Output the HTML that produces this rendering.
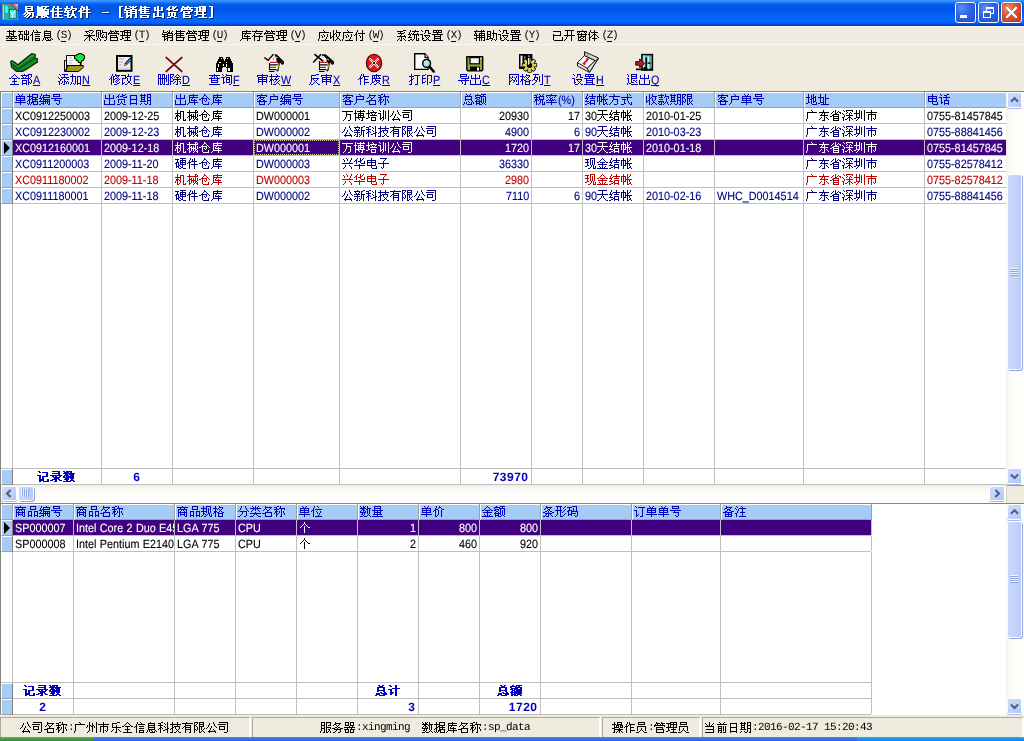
<!DOCTYPE html>
<html lang="zh-CN"><head><meta charset="utf-8"><title>易顺佳软件 - [销售出货管理]</title>
<style>
*{box-sizing:border-box;margin:0;padding:0}
html,body{width:1024px;height:741px;overflow:hidden}
body{position:relative;will-change:transform;text-rendering:geometricPrecision;background:#efebde;font-family:"Liberation Sans",sans-serif;font-size:12px;line-height:12px;color:#000;cursor:default}
svg{display:block;shape-rendering:crispEdges;fill:currentColor;overflow:visible}
u{text-decoration:none}
/* bitmap CJK run + real text layer */
.c{display:inline-block;position:relative;height:12px;vertical-align:top;overflow:visible}
.c svg{position:absolute;left:0;top:0}
.t{position:absolute;left:0;top:0;width:100%;height:100%;overflow:hidden;white-space:nowrap;color:transparent;font-size:12px;line-height:12px}
.l,.lb{display:inline-block;vertical-align:top;height:12px;line-height:13px;font-size:12px;white-space:pre}
.l{transform:scaleX(.9);transform-origin:0 0;word-spacing:.4px;-webkit-text-stroke:.12px currentColor}
.lb{font-weight:bold;letter-spacing:.5px;margin-right:-.5px}
.m,.mo{display:inline-block;vertical-align:top;height:12px;line-height:13px;font-family:"Liberation Mono",monospace;font-size:11px;letter-spacing:-.6px;white-space:pre}
.tl .l{line-height:12px}
.m u,.tl u{display:inline-block;vertical-align:top;border-bottom:1px solid currentColor;height:12px;line-height:inherit}

/* title bar */
#titlebar{position:absolute;left:0;top:0;width:1024px;height:26px;
 background:linear-gradient(to bottom,#3d97ff 0,#2f8cff 1.5px,#0e6ef6 3px,#0259e8 5px,#0055e4 8px,#025bee 12px,#0564fa 16px,#0668ff 21px,#0460f6 23px,#0050e0 24px,#0040c8 25px,#0038b8 26px)}
#titlebar .ttl{position:absolute;left:0;top:6px}
.ttlt{left:23px;top:5px;width:192px;height:14px;font-size:13px;font-weight:bold}
.wb{position:absolute;top:2px;width:21px;height:21px;border:1px solid #fff;border-radius:3px;
 background:radial-gradient(circle at 30% 25%,#5a8cf8 0,#2e63e6 45%,#2050d2 100%);box-shadow:inset 0 0 2px rgba(0,0,40,.35)}
.wb.cls{background:radial-gradient(circle at 30% 25%,#ee8a6a 0,#d8502c 50%,#c23c1c 100%)}
.wb svg{position:absolute;left:-1px;top:-1px}
.wb.min i{position:absolute;left:4px;top:12px;width:7px;height:3px;background:#fff}
.wb.rst i{position:absolute;left:7px;top:4px;width:8px;height:7px;border:1px solid #fff;border-top-width:2px}
.wb.rst b{position:absolute;left:4px;top:8px;width:8px;height:7px;border:1px solid #fff;border-top-width:2px;background:#2e5fe0}

/* menu */
#menubar{position:absolute;left:0;top:26px;width:1024px;height:19px;background:#efebde;border-top:1px solid #fbfaf6;border-bottom:1px solid #f8f7f1}
.mi{position:absolute;top:3px;height:12px;white-space:nowrap}
.mi .m{margin-left:1.500px;letter-spacing:-1.400px}

/* toolbar */
#toolbar{position:absolute;left:0;top:46px;width:1024px;height:45px;background:#efebde}
.tb{position:absolute;top:0;width:50px;height:44px}
.tb>svg{position:absolute}
.tl{position:absolute;top:28px;height:13px;white-space:nowrap;color:#0000c0}

/* grids */
.grid{position:absolute;left:0;width:1024px;background:#fff;border-left:1px solid #85857a;border-top:1px solid #85857a;overflow:hidden}
.grid>*{margin-left:-1px;margin-top:-1px}
.hr{position:absolute;left:0;height:16px;width:1024px}
.hc{position:absolute;top:0;height:16px;background:#a5cbf7;border-left:1px solid #fff;border-top:1px solid #fff;border-bottom:1px solid #a0a0a0;box-shadow:1px 0 0 #a0a0a0;color:#0000c0;padding:1px 0 0 1px;white-space:nowrap;overflow:hidden}
.hc.ind{}
.row,.frow{position:absolute;left:0;height:16px;border-bottom:1px solid #c0c0c0}
.frow{border-top:0}
.row.sel{background:#400080}
.ic{position:absolute;left:1px;top:0;height:16px;background:#a5cbf7;border-left:1px solid #fff;border-top:1px solid #fff;border-bottom:1px solid #a0a0a0;box-shadow:1px 0 0 #808080}
.row.sel .ic{height:16px}
.ic s{position:absolute;left:2px;top:1px;width:0;height:0;border-left:6px solid #000;border-top:6px solid transparent;border-bottom:6px solid transparent}
.dc,.fc{position:absolute;top:0;height:15px;padding:2px 2px 0 2px;white-space:nowrap;overflow:hidden;box-shadow:1px 0 0 #c0c0c0}
.row.sel .dc{box-shadow:1px 0 0 #c0c0c0}
.R{text-align:right}.C{text-align:center}
.foc{outline:1px dotted #d0d0a0;outline-offset:-1px}
.fc{color:#0000c0;padding-right:3px}
.vl{position:absolute;width:1px;background:#c0c0c0}
.hl{position:absolute;height:1px;background:#c0c0c0}

/* status bar */
#status{position:absolute;left:0;top:715px;width:1024px;height:22px;background:#efebde}
.sp{position:absolute;top:2px;height:20px;border-top:1px solid #aca899;border-left:1px solid #aca899;border-right:2px solid #fff}
.st{position:absolute;top:4px;white-space:nowrap;height:12px}
#taskbar{position:absolute;left:0;top:737px;width:1024px;height:4px;background:linear-gradient(#4a8cf4,#2f74e6 50%,#2a6be0)}
#taskbar b{position:absolute;left:857px;top:0;width:167px;height:4px;background:linear-gradient(#3aa8f6,#1a90ee 50%,#168ae8)}
#taskbar div{width:94px;height:4px;background:linear-gradient(#62b862,#3f9a3f 50%,#3a943a)}

/* scrollbars */
.sbv{position:absolute;width:17px;background:linear-gradient(to right,#eeede6 0,#f6f5f0 1px,#f9f8f4 3px,#fdfdfb 8px,#fefefc 100%)}
.sbh{position:absolute;height:18px;background:linear-gradient(to bottom,#f3f1ec 0,#f8f7f3 3px,#fdfdfb 8px,#fefefc 100%);border-top:1px solid #eeede5}
.sbc{position:absolute;width:18px;height:18px;background:#efebde;border-top:1px solid #78a4dc;border-left:1px solid #d8d4c4}
.sbb{position:absolute;border-radius:1px;background:linear-gradient(135deg,#cddbfe 0,#c1d2fb 50%,#b3c6f4 100%);box-shadow:0 0 0 1px #fff,0 1px 0 1px #a9bde6}
.sbb svg{position:absolute;left:0;top:0}
.sbt{position:absolute;border-radius:2px;background:linear-gradient(to right,#cad9fe 0,#c3d3fb 60%,#b7c9f5 100%);box-shadow:0 0 0 1px #fff,1px 1px 0 1px #8ea5d6}
.sbt .gv{position:absolute;left:2px;width:8px;height:8px;background:repeating-linear-gradient(to bottom,#eef3ff 0,#eef3ff 1px,#8ca4dc 1px,#8ca4dc 2px)}
.sbt .gh{position:absolute;top:2px;height:8px;width:8px;background:repeating-linear-gradient(to right,#eef3ff 0,#eef3ff 1px,#8ca4dc 1px,#8ca4dc 2px)}

</style></head><body>
<svg width="0" height="0" style="position:absolute" aria-hidden="true"><defs><path id="g13_6613" d="M3 0h7v1h-7zM3 1h1v1h-1zM9 1h1v1h-1zM3 2h7v1h-7zM3 3h1v1h-1zM9 3h1v1h-1zM3 4h7v1h-7zM4 5h1v1h-1zM3 6h8v1h-8zM2 7h1v1h-1zM5 7h1v1h-1zM7 7h1v1h-1zM10 7h1v1h-1zM1 8h1v1h-1zM4 8h1v1h-1zM7 8h1v1h-1zM10 8h1v1h-1zM3 9h1v1h-1zM6 9h1v1h-1zM10 9h1v1h-1zM2 10h1v1h-1zM5 10h1v1h-1zM10 10h1v1h-1zM4 11h1v1h-1zM8 11h2v1h-2z"/><path id="g13_987a" d="M1 0h1v1h-1zM5 0h1v1h-1zM7 0h5v1h-5zM1 1h1v1h-1zM3 1h1v1h-1zM5 1h1v1h-1zM9 1h1v1h-1zM1 2h1v1h-1zM3 2h1v1h-1zM5 2h1v1h-1zM8 2h1v1h-1zM1 3h1v1h-1zM3 3h1v1h-1zM5 3h1v1h-1zM7 3h5v1h-5zM1 4h1v1h-1zM3 4h1v1h-1zM5 4h1v1h-1zM7 4h1v1h-1zM11 4h1v1h-1zM1 5h1v1h-1zM3 5h1v1h-1zM5 5h1v1h-1zM7 5h1v1h-1zM9 5h1v1h-1zM11 5h1v1h-1zM1 6h1v1h-1zM3 6h1v1h-1zM5 6h1v1h-1zM7 6h1v1h-1zM9 6h1v1h-1zM11 6h1v1h-1zM1 7h1v1h-1zM3 7h1v1h-1zM5 7h1v1h-1zM7 7h1v1h-1zM9 7h1v1h-1zM11 7h1v1h-1zM1 8h1v1h-1zM3 8h1v1h-1zM5 8h1v1h-1zM7 8h1v1h-1zM9 8h1v1h-1zM11 8h1v1h-1zM1 9h1v1h-1zM3 9h1v1h-1zM5 9h1v1h-1zM7 9h1v1h-1zM9 9h1v1h-1zM0 10h1v1h-1zM5 10h1v1h-1zM8 10h1v1h-1zM10 10h1v1h-1zM0 11h1v1h-1zM5 11h1v1h-1zM7 11h1v1h-1zM11 11h1v1h-1z"/><path id="g13_4f73" d="M3 0h1v1h-1zM7 0h1v1h-1zM3 1h1v1h-1zM7 1h1v1h-1zM2 2h1v1h-1zM5 2h6v1h-6zM2 3h1v1h-1zM7 3h1v1h-1zM1 4h2v1h-2zM7 4h1v1h-1zM0 5h1v1h-1zM2 5h1v1h-1zM4 5h8v1h-8zM2 6h1v1h-1zM7 6h1v1h-1zM2 7h1v1h-1zM7 7h1v1h-1zM2 8h1v1h-1zM5 8h6v1h-6zM2 9h1v1h-1zM7 9h1v1h-1zM2 10h1v1h-1zM7 10h1v1h-1zM2 11h1v1h-1zM4 11h8v1h-8z"/><path id="g13_8f6f" d="M2 0h1v1h-1zM7 0h1v1h-1zM2 1h1v1h-1zM7 1h1v1h-1zM0 2h5v1h-5zM7 2h5v1h-5zM1 3h1v1h-1zM6 3h1v1h-1zM11 3h1v1h-1zM1 4h1v1h-1zM3 4h1v1h-1zM5 4h1v1h-1zM8 4h1v1h-1zM10 4h1v1h-1zM0 5h1v1h-1zM3 5h1v1h-1zM8 5h1v1h-1zM0 6h5v1h-5zM8 6h1v1h-1zM3 7h1v1h-1zM8 7h1v1h-1zM3 8h2v1h-2zM7 8h1v1h-1zM9 8h1v1h-1zM0 9h4v1h-4zM7 9h1v1h-1zM9 9h1v1h-1zM3 10h1v1h-1zM6 10h1v1h-1zM10 10h1v1h-1zM3 11h1v1h-1zM5 11h1v1h-1zM11 11h1v1h-1z"/><path id="g13_4ef6" d="M3 0h1v1h-1zM8 0h1v1h-1zM3 1h1v1h-1zM5 1h1v1h-1zM8 1h1v1h-1zM2 2h1v1h-1zM5 2h1v1h-1zM8 2h1v1h-1zM2 3h1v1h-1zM5 3h6v1h-6zM1 4h2v1h-2zM4 4h1v1h-1zM8 4h1v1h-1zM0 5h1v1h-1zM2 5h1v1h-1zM8 5h1v1h-1zM2 6h1v1h-1zM4 6h8v1h-8zM2 7h1v1h-1zM8 7h1v1h-1zM2 8h1v1h-1zM8 8h1v1h-1zM2 9h1v1h-1zM8 9h1v1h-1zM2 10h1v1h-1zM8 10h1v1h-1zM2 11h1v1h-1zM8 11h1v1h-1z"/><path id="g13_2d" d="M0 6h6v1h-6z"/><path id="g13_5b" d="M2 0h3v1h-3zM2 1h1v1h-1zM2 2h1v1h-1zM2 3h1v1h-1zM2 4h1v1h-1zM2 5h1v1h-1zM2 6h1v1h-1zM2 7h1v1h-1zM2 8h1v1h-1zM2 9h1v1h-1zM2 10h1v1h-1zM2 11h3v1h-3z"/><path id="g13_9500" d="M1 0h1v1h-1zM5 0h1v1h-1zM8 0h1v1h-1zM11 0h1v1h-1zM1 1h1v1h-1zM6 1h1v1h-1zM8 1h1v1h-1zM10 1h1v1h-1zM1 2h4v1h-4zM8 2h1v1h-1zM0 3h1v1h-1zM6 3h6v1h-6zM0 4h5v1h-5zM6 4h1v1h-1zM11 4h1v1h-1zM2 5h1v1h-1zM6 5h6v1h-6zM0 6h5v1h-5zM6 6h1v1h-1zM11 6h1v1h-1zM2 7h1v1h-1zM6 7h6v1h-6zM2 8h1v1h-1zM6 8h1v1h-1zM11 8h1v1h-1zM2 9h1v1h-1zM4 9h1v1h-1zM6 9h1v1h-1zM11 9h1v1h-1zM2 10h2v1h-2zM6 10h1v1h-1zM11 10h1v1h-1zM2 11h1v1h-1zM6 11h1v1h-1zM10 11h2v1h-2z"/><path id="g13_552e" d="M2 0h1v1h-1zM6 0h1v1h-1zM2 1h9v1h-9zM2 2h1v1h-1zM6 2h1v1h-1zM1 3h9v1h-9zM0 4h1v1h-1zM2 4h1v1h-1zM6 4h1v1h-1zM2 5h8v1h-8zM2 6h1v1h-1zM6 6h1v1h-1zM2 7h9v1h-9zM2 9h8v1h-8zM2 10h1v1h-1zM9 10h1v1h-1zM2 11h8v1h-8z"/><path id="g13_51fa" d="M5 0h1v1h-1zM2 1h1v1h-1zM5 1h1v1h-1zM9 1h1v1h-1zM2 2h1v1h-1zM5 2h1v1h-1zM9 2h1v1h-1zM2 3h1v1h-1zM5 3h1v1h-1zM9 3h1v1h-1zM2 4h8v1h-8zM5 5h1v1h-1zM5 6h1v1h-1zM1 7h1v1h-1zM5 7h1v1h-1zM10 7h1v1h-1zM1 8h1v1h-1zM5 8h1v1h-1zM10 8h1v1h-1zM1 9h1v1h-1zM5 9h1v1h-1zM10 9h1v1h-1zM1 10h10v1h-10zM1 11h1v1h-1zM10 11h1v1h-1z"/><path id="g13_8d27" d="M3 0h1v1h-1zM6 0h1v1h-1zM9 0h1v1h-1zM2 1h1v1h-1zM6 1h1v1h-1zM8 1h1v1h-1zM1 2h2v1h-2zM6 2h2v1h-2zM0 3h1v1h-1zM2 3h1v1h-1zM4 3h3v1h-3zM10 3h1v1h-1zM2 4h1v1h-1zM7 4h4v1h-4zM2 6h7v1h-7zM2 7h1v1h-1zM5 7h1v1h-1zM8 7h1v1h-1zM2 8h1v1h-1zM5 8h1v1h-1zM8 8h1v1h-1zM2 9h1v1h-1zM5 9h1v1h-1zM8 9h1v1h-1zM4 10h1v1h-1zM6 10h2v1h-2zM1 11h3v1h-3zM8 11h2v1h-2z"/><path id="g13_7ba1" d="M2 0h1v1h-1zM7 0h1v1h-1zM2 1h4v1h-4zM7 1h5v1h-5zM1 2h1v1h-1zM4 2h1v1h-1zM6 2h1v1h-1zM9 2h1v1h-1zM1 3h11v1h-11zM1 4h1v1h-1zM11 4h1v1h-1zM0 5h1v1h-1zM3 5h6v1h-6zM10 5h1v1h-1zM3 6h1v1h-1zM8 6h1v1h-1zM3 7h6v1h-6zM3 8h1v1h-1zM3 9h7v1h-7zM3 10h1v1h-1zM9 10h1v1h-1zM3 11h7v1h-7z"/><path id="g13_7406" d="M5 0h6v1h-6zM0 1h4v1h-4zM5 1h1v1h-1zM8 1h1v1h-1zM10 1h1v1h-1zM2 2h1v1h-1zM5 2h1v1h-1zM8 2h1v1h-1zM10 2h1v1h-1zM2 3h1v1h-1zM5 3h6v1h-6zM2 4h1v1h-1zM5 4h1v1h-1zM8 4h1v1h-1zM10 4h1v1h-1zM0 5h4v1h-4zM5 5h6v1h-6zM2 6h1v1h-1zM8 6h1v1h-1zM2 7h1v1h-1zM8 7h1v1h-1zM2 8h2v1h-2zM5 8h6v1h-6zM0 9h2v1h-2zM8 9h1v1h-1zM8 10h1v1h-1zM4 11h8v1h-8z"/><path id="g13_5d" d="M2 0h3v1h-3zM4 1h1v1h-1zM4 2h1v1h-1zM4 3h1v1h-1zM4 4h1v1h-1zM4 5h1v1h-1zM4 6h1v1h-1zM4 7h1v1h-1zM4 8h1v1h-1zM4 9h1v1h-1zM4 10h1v1h-1zM2 11h3v1h-3z"/><path id="g12_57fa" d="M3 0h1v1h-1zM7 0h1v1h-1zM1 1h9v1h-9zM3 2h1v1h-1zM7 2h1v1h-1zM3 3h3v1h-3zM7 3h1v1h-1zM3 4h1v1h-1zM5 4h3v1h-3zM3 5h1v1h-1zM7 5h1v1h-1zM0 6h11v1h-11zM2 7h1v1h-1zM5 7h1v1h-1zM8 7h1v1h-1zM0 8h2v1h-2zM3 8h5v1h-5zM9 8h2v1h-2zM5 9h1v1h-1zM0 10h11v1h-11z"/><path id="g12_7840" d="M8 0h1v1h-1zM0 1h5v1h-5zM6 1h1v1h-1zM8 1h1v1h-1zM10 1h1v1h-1zM2 2h1v1h-1zM6 2h1v1h-1zM8 2h1v1h-1zM10 2h1v1h-1zM2 3h1v1h-1zM6 3h1v1h-1zM8 3h1v1h-1zM10 3h1v1h-1zM1 4h4v1h-4zM6 4h5v1h-5zM0 5h2v1h-2zM4 5h1v1h-1zM8 5h1v1h-1zM1 6h1v1h-1zM4 6h1v1h-1zM6 6h1v1h-1zM8 6h1v1h-1zM10 6h1v1h-1zM1 7h1v1h-1zM4 7h1v1h-1zM6 7h1v1h-1zM8 7h1v1h-1zM10 7h1v1h-1zM1 8h4v1h-4zM6 8h1v1h-1zM8 8h1v1h-1zM10 8h1v1h-1zM1 9h1v1h-1zM4 9h1v1h-1zM6 9h5v1h-5zM6 10h1v1h-1zM10 10h1v1h-1z"/><path id="g12_4fe1" d="M3 0h1v1h-1zM6 0h1v1h-1zM3 1h1v1h-1zM7 1h1v1h-1zM2 2h1v1h-1zM4 2h7v1h-7zM2 3h1v1h-1zM1 4h2v1h-2zM5 4h5v1h-5zM0 5h1v1h-1zM2 5h1v1h-1zM2 6h1v1h-1zM5 6h5v1h-5zM2 7h1v1h-1zM2 8h1v1h-1zM5 8h5v1h-5zM2 9h1v1h-1zM5 9h1v1h-1zM9 9h1v1h-1zM2 10h1v1h-1zM5 10h5v1h-5z"/><path id="g12_606f" d="M4 0h1v1h-1zM2 1h7v1h-7zM2 2h1v1h-1zM8 2h1v1h-1zM2 3h7v1h-7zM2 4h1v1h-1zM8 4h1v1h-1zM2 5h7v1h-7zM2 6h1v1h-1zM8 6h1v1h-1zM2 7h7v1h-7zM1 8h1v1h-1zM3 8h1v1h-1zM5 8h1v1h-1zM9 8h1v1h-1zM1 9h1v1h-1zM3 9h1v1h-1zM6 9h1v1h-1zM8 9h1v1h-1zM10 9h1v1h-1zM0 10h1v1h-1zM4 10h5v1h-5z"/><path id="g12_91c7" d="M5 0h4v1h-4zM1 1h4v1h-4zM9 1h1v1h-1zM2 2h1v1h-1zM5 2h1v1h-1zM8 2h1v1h-1zM3 3h1v1h-1zM7 3h1v1h-1zM5 4h1v1h-1zM0 5h11v1h-11zM4 6h3v1h-3zM3 7h1v1h-1zM5 7h1v1h-1zM7 7h1v1h-1zM2 8h1v1h-1zM5 8h1v1h-1zM8 8h1v1h-1zM1 9h1v1h-1zM5 9h1v1h-1zM9 9h2v1h-2zM0 10h1v1h-1zM5 10h1v1h-1zM10 10h1v1h-1z"/><path id="g12_8d2d" d="M0 0h5v1h-5zM6 0h1v1h-1zM0 1h1v1h-1zM4 1h1v1h-1zM6 1h1v1h-1zM0 2h1v1h-1zM2 2h1v1h-1zM4 2h1v1h-1zM6 2h5v1h-5zM0 3h1v1h-1zM2 3h1v1h-1zM4 3h2v1h-2zM10 3h1v1h-1zM0 4h1v1h-1zM2 4h1v1h-1zM4 4h1v1h-1zM7 4h1v1h-1zM10 4h1v1h-1zM0 5h1v1h-1zM2 5h1v1h-1zM4 5h1v1h-1zM6 5h1v1h-1zM10 5h1v1h-1zM0 6h1v1h-1zM2 6h1v1h-1zM4 6h1v1h-1zM6 6h1v1h-1zM8 6h1v1h-1zM10 6h1v1h-1zM2 7h1v1h-1zM5 7h3v1h-3zM9 7h2v1h-2zM1 8h1v1h-1zM3 8h1v1h-1zM10 8h1v1h-1zM1 9h1v1h-1zM4 9h1v1h-1zM10 9h1v1h-1zM0 10h1v1h-1zM4 10h1v1h-1zM8 10h2v1h-2z"/><path id="g12_7ba1" d="M2 0h1v1h-1zM7 0h1v1h-1zM2 1h4v1h-4zM7 1h4v1h-4zM1 2h1v1h-1zM3 2h1v1h-1zM6 2h1v1h-1zM8 2h1v1h-1zM0 3h11v1h-11zM0 4h1v1h-1zM10 4h1v1h-1zM2 5h7v1h-7zM2 6h1v1h-1zM8 6h1v1h-1zM2 7h8v1h-8zM2 8h1v1h-1zM9 8h1v1h-1zM2 9h1v1h-1zM9 9h1v1h-1zM2 10h8v1h-8z"/><path id="g12_7406" d="M4 0h7v1h-7zM0 1h5v1h-5zM7 1h1v1h-1zM10 1h1v1h-1zM2 2h1v1h-1zM4 2h7v1h-7zM2 3h1v1h-1zM4 3h1v1h-1zM7 3h1v1h-1zM10 3h1v1h-1zM2 4h1v1h-1zM4 4h1v1h-1zM7 4h1v1h-1zM10 4h1v1h-1zM0 5h11v1h-11zM2 6h1v1h-1zM7 6h1v1h-1zM2 7h1v1h-1zM5 7h5v1h-5zM2 8h2v1h-2zM7 8h1v1h-1zM0 9h2v1h-2zM7 9h1v1h-1zM4 10h7v1h-7z"/><path id="g12_9500" d="M1 0h1v1h-1zM7 0h1v1h-1zM1 1h1v1h-1zM5 1h1v1h-1zM7 1h1v1h-1zM10 1h1v1h-1zM1 2h4v1h-4zM6 2h2v1h-2zM9 2h1v1h-1zM0 3h1v1h-1zM5 3h6v1h-6zM0 4h6v1h-6zM10 4h1v1h-1zM2 5h1v1h-1zM5 5h6v1h-6zM0 6h6v1h-6zM10 6h1v1h-1zM2 7h1v1h-1zM5 7h6v1h-6zM2 8h1v1h-1zM4 8h2v1h-2zM10 8h1v1h-1zM2 9h2v1h-2zM5 9h1v1h-1zM10 9h1v1h-1zM2 10h1v1h-1zM5 10h1v1h-1zM8 10h3v1h-3z"/><path id="g12_552e" d="M2 0h1v1h-1zM6 0h1v1h-1zM2 1h9v1h-9zM2 2h1v1h-1zM6 2h1v1h-1zM1 3h9v1h-9zM0 4h1v1h-1zM2 4h1v1h-1zM6 4h1v1h-1zM2 5h8v1h-8zM2 6h1v1h-1zM6 6h1v1h-1zM2 7h9v1h-9zM2 8h1v1h-1zM9 8h1v1h-1zM2 9h1v1h-1zM9 9h1v1h-1zM2 10h8v1h-8z"/><path id="g12_5e93" d="M6 0h1v1h-1zM2 1h9v1h-9zM2 2h1v1h-1zM6 2h1v1h-1zM2 3h9v1h-9zM2 4h1v1h-1zM5 4h1v1h-1zM2 5h1v1h-1zM4 5h1v1h-1zM7 5h1v1h-1zM2 6h1v1h-1zM4 6h6v1h-6zM2 7h1v1h-1zM7 7h1v1h-1zM2 8h9v1h-9zM1 9h1v1h-1zM7 9h1v1h-1zM0 10h1v1h-1zM7 10h1v1h-1z"/><path id="g12_5b58" d="M4 0h1v1h-1zM0 1h11v1h-11zM3 2h1v1h-1zM2 3h1v1h-1zM4 3h6v1h-6zM2 4h1v1h-1zM8 4h1v1h-1zM1 5h2v1h-2zM7 5h1v1h-1zM0 6h1v1h-1zM2 6h9v1h-9zM2 7h1v1h-1zM7 7h1v1h-1zM2 8h1v1h-1zM7 8h1v1h-1zM2 9h1v1h-1zM7 9h1v1h-1zM2 10h1v1h-1zM5 10h3v1h-3z"/><path id="g12_5e94" d="M5 0h1v1h-1zM6 1h1v1h-1zM1 2h10v1h-10zM1 3h1v1h-1zM1 4h1v1h-1zM5 4h1v1h-1zM9 4h1v1h-1zM1 5h1v1h-1zM3 5h1v1h-1zM6 5h1v1h-1zM9 5h1v1h-1zM1 6h1v1h-1zM4 6h1v1h-1zM6 6h1v1h-1zM9 6h1v1h-1zM1 7h1v1h-1zM4 7h1v1h-1zM8 7h1v1h-1zM1 8h1v1h-1zM8 8h1v1h-1zM0 9h1v1h-1zM7 9h1v1h-1zM0 10h1v1h-1zM3 10h8v1h-8z"/><path id="g12_6536" d="M3 0h1v1h-1zM6 0h1v1h-1zM3 1h1v1h-1zM6 1h1v1h-1zM0 2h1v1h-1zM3 2h1v1h-1zM6 2h5v1h-5zM0 3h1v1h-1zM3 3h1v1h-1zM5 3h1v1h-1zM9 3h1v1h-1zM0 4h1v1h-1zM3 4h2v1h-2zM6 4h1v1h-1zM9 4h1v1h-1zM0 5h1v1h-1zM3 5h1v1h-1zM6 5h1v1h-1zM9 5h1v1h-1zM0 6h1v1h-1zM2 6h2v1h-2zM6 6h1v1h-1zM8 6h1v1h-1zM0 7h2v1h-2zM3 7h1v1h-1zM7 7h1v1h-1zM0 8h1v1h-1zM3 8h1v1h-1zM7 8h2v1h-2zM3 9h1v1h-1zM6 9h1v1h-1zM9 9h1v1h-1zM3 10h1v1h-1zM5 10h1v1h-1zM10 10h1v1h-1z"/><path id="g12_4ed8" d="M3 0h1v1h-1zM8 0h1v1h-1zM3 1h1v1h-1zM8 1h1v1h-1zM2 2h1v1h-1zM8 2h1v1h-1zM2 3h1v1h-1zM4 3h7v1h-7zM1 4h2v1h-2zM8 4h1v1h-1zM0 5h1v1h-1zM2 5h1v1h-1zM5 5h1v1h-1zM8 5h1v1h-1zM2 6h1v1h-1zM6 6h1v1h-1zM8 6h1v1h-1zM2 7h1v1h-1zM6 7h1v1h-1zM8 7h1v1h-1zM2 8h1v1h-1zM8 8h1v1h-1zM2 9h1v1h-1zM8 9h1v1h-1zM2 10h1v1h-1zM6 10h3v1h-3z"/><path id="g12_7cfb" d="M7 0h3v1h-3zM1 1h6v1h-6zM4 2h1v1h-1zM8 2h1v1h-1zM2 3h6v1h-6zM5 4h1v1h-1zM4 5h1v1h-1zM8 5h1v1h-1zM1 6h9v1h-9zM5 7h1v1h-1zM9 7h1v1h-1zM3 8h1v1h-1zM5 8h1v1h-1zM7 8h1v1h-1zM2 9h1v1h-1zM5 9h1v1h-1zM8 9h1v1h-1zM1 10h1v1h-1zM4 10h2v1h-2zM9 10h1v1h-1z"/><path id="g12_7edf" d="M2 0h1v1h-1zM7 0h1v1h-1zM2 1h1v1h-1zM4 1h7v1h-7zM1 2h1v1h-1zM6 2h1v1h-1zM1 3h1v1h-1zM3 3h1v1h-1zM5 3h1v1h-1zM9 3h1v1h-1zM0 4h3v1h-3zM4 4h7v1h-7zM2 5h1v1h-1zM6 5h1v1h-1zM8 5h1v1h-1zM10 5h1v1h-1zM1 6h1v1h-1zM6 6h1v1h-1zM8 6h1v1h-1zM0 7h4v1h-4zM6 7h1v1h-1zM8 7h1v1h-1zM6 8h1v1h-1zM8 8h1v1h-1zM10 8h1v1h-1zM2 9h2v1h-2zM5 9h1v1h-1zM8 9h1v1h-1zM10 9h1v1h-1zM0 10h2v1h-2zM4 10h1v1h-1zM8 10h3v1h-3z"/><path id="g12_8bbe" d="M1 0h1v1h-1zM5 0h4v1h-4zM2 1h1v1h-1zM5 1h1v1h-1zM8 1h1v1h-1zM5 2h1v1h-1zM8 2h1v1h-1zM4 3h1v1h-1zM8 3h3v1h-3zM0 4h3v1h-3zM2 5h1v1h-1zM4 5h6v1h-6zM2 6h1v1h-1zM5 6h1v1h-1zM9 6h1v1h-1zM2 7h1v1h-1zM6 7h1v1h-1zM8 7h1v1h-1zM2 8h2v1h-2zM7 8h1v1h-1zM2 9h1v1h-1zM6 9h1v1h-1zM8 9h1v1h-1zM3 10h3v1h-3zM9 10h2v1h-2z"/><path id="g12_7f6e" d="M1 0h9v1h-9zM1 1h1v1h-1zM4 1h1v1h-1zM6 1h1v1h-1zM9 1h1v1h-1zM1 2h9v1h-9zM5 3h1v1h-1zM0 4h11v1h-11zM2 5h1v1h-1zM8 5h1v1h-1zM2 6h7v1h-7zM2 7h1v1h-1zM8 7h1v1h-1zM2 8h7v1h-7zM2 9h1v1h-1zM8 9h1v1h-1zM0 10h11v1h-11z"/><path id="g12_8f85" d="M2 0h1v1h-1zM7 0h1v1h-1zM9 0h1v1h-1zM0 1h11v1h-11zM1 2h1v1h-1zM7 2h1v1h-1zM1 3h2v1h-2zM5 3h6v1h-6zM0 4h1v1h-1zM2 4h1v1h-1zM5 4h1v1h-1zM7 4h1v1h-1zM10 4h1v1h-1zM0 5h11v1h-11zM2 6h1v1h-1zM5 6h1v1h-1zM7 6h1v1h-1zM10 6h1v1h-1zM2 7h9v1h-9zM0 8h3v1h-3zM5 8h1v1h-1zM7 8h1v1h-1zM10 8h1v1h-1zM2 9h1v1h-1zM5 9h1v1h-1zM7 9h1v1h-1zM10 9h1v1h-1zM2 10h1v1h-1zM5 10h1v1h-1zM7 10h1v1h-1zM9 10h2v1h-2z"/><path id="g12_52a9" d="M7 0h1v1h-1zM1 1h4v1h-4zM7 1h1v1h-1zM1 2h1v1h-1zM4 2h1v1h-1zM7 2h1v1h-1zM1 3h1v1h-1zM4 3h1v1h-1zM6 3h5v1h-5zM1 4h4v1h-4zM7 4h1v1h-1zM10 4h1v1h-1zM1 5h1v1h-1zM4 5h1v1h-1zM7 5h1v1h-1zM10 5h1v1h-1zM1 6h4v1h-4zM7 6h1v1h-1zM10 6h1v1h-1zM1 7h1v1h-1zM4 7h1v1h-1zM7 7h1v1h-1zM10 7h1v1h-1zM1 8h1v1h-1zM3 8h4v1h-4zM10 8h1v1h-1zM0 9h3v1h-3zM6 9h1v1h-1zM8 9h1v1h-1zM10 9h1v1h-1zM5 10h1v1h-1zM9 10h1v1h-1z"/><path id="g12_5df2" d="M1 1h8v1h-8zM8 2h1v1h-1zM8 3h1v1h-1zM1 4h1v1h-1zM8 4h1v1h-1zM1 5h8v1h-8zM1 6h1v1h-1zM1 7h1v1h-1zM10 7h1v1h-1zM1 8h1v1h-1zM10 8h1v1h-1zM1 9h1v1h-1zM10 9h1v1h-1zM2 10h9v1h-9z"/><path id="g12_5f00" d="M1 0h9v1h-9zM3 1h1v1h-1zM7 1h1v1h-1zM3 2h1v1h-1zM7 2h1v1h-1zM3 3h1v1h-1zM7 3h1v1h-1zM3 4h1v1h-1zM7 4h1v1h-1zM0 5h11v1h-11zM3 6h1v1h-1zM7 6h1v1h-1zM2 7h1v1h-1zM7 7h1v1h-1zM2 8h1v1h-1zM7 8h1v1h-1zM1 9h1v1h-1zM7 9h1v1h-1zM0 10h1v1h-1zM7 10h1v1h-1z"/><path id="g12_7a97" d="M6 0h1v1h-1zM1 1h10v1h-10zM1 2h1v1h-1zM3 2h1v1h-1zM8 2h1v1h-1zM10 2h1v1h-1zM2 3h1v1h-1zM5 3h1v1h-1zM9 3h1v1h-1zM1 4h10v1h-10zM2 5h1v1h-1zM5 5h1v1h-1zM9 5h1v1h-1zM2 6h1v1h-1zM4 6h6v1h-6zM2 7h3v1h-3zM7 7h1v1h-1zM9 7h1v1h-1zM2 8h1v1h-1zM5 8h2v1h-2zM9 8h1v1h-1zM2 9h1v1h-1zM4 9h1v1h-1zM7 9h1v1h-1zM9 9h1v1h-1zM2 10h8v1h-8z"/><path id="g12_4f53" d="M2 0h1v1h-1zM6 0h1v1h-1zM2 1h1v1h-1zM6 1h1v1h-1zM1 2h1v1h-1zM3 2h7v1h-7zM1 3h1v1h-1zM6 3h1v1h-1zM0 4h2v1h-2zM5 4h3v1h-3zM1 5h1v1h-1zM4 5h1v1h-1zM6 5h1v1h-1zM8 5h1v1h-1zM1 6h1v1h-1zM3 6h1v1h-1zM6 6h1v1h-1zM9 6h1v1h-1zM1 7h2v1h-2zM6 7h1v1h-1zM10 7h1v1h-1zM1 8h1v1h-1zM4 8h5v1h-5zM1 9h1v1h-1zM6 9h1v1h-1zM1 10h1v1h-1zM6 10h1v1h-1z"/><path id="g12_5168" d="M5 0h1v1h-1zM4 1h1v1h-1zM6 1h1v1h-1zM3 2h1v1h-1zM7 2h1v1h-1zM2 3h1v1h-1zM8 3h1v1h-1zM0 4h2v1h-2zM3 4h5v1h-5zM9 4h2v1h-2zM5 5h1v1h-1zM5 6h1v1h-1zM3 7h5v1h-5zM5 8h1v1h-1zM5 9h1v1h-1zM1 10h9v1h-9z"/><path id="g12_90e8" d="M3 0h1v1h-1zM7 0h4v1h-4zM0 1h8v1h-8zM10 1h1v1h-1zM1 2h1v1h-1zM5 2h1v1h-1zM7 2h1v1h-1zM10 2h1v1h-1zM2 3h1v1h-1zM4 3h1v1h-1zM7 3h1v1h-1zM9 3h1v1h-1zM0 4h9v1h-9zM7 5h1v1h-1zM9 5h1v1h-1zM1 6h5v1h-5zM7 6h1v1h-1zM10 6h1v1h-1zM1 7h1v1h-1zM5 7h1v1h-1zM7 7h1v1h-1zM10 7h1v1h-1zM1 8h1v1h-1zM5 8h1v1h-1zM7 8h2v1h-2zM10 8h1v1h-1zM1 9h5v1h-5zM7 9h1v1h-1zM9 9h1v1h-1zM1 10h1v1h-1zM5 10h1v1h-1zM7 10h1v1h-1z"/><path id="g12_6dfb" d="M1 0h1v1h-1zM4 0h6v1h-6zM2 1h1v1h-1zM6 1h1v1h-1zM6 2h1v1h-1zM0 3h1v1h-1zM3 3h8v1h-8zM1 4h1v1h-1zM4 4h1v1h-1zM8 4h1v1h-1zM2 5h2v1h-2zM6 5h1v1h-1zM9 5h2v1h-2zM2 6h1v1h-1zM6 6h1v1h-1zM0 7h2v1h-2zM4 7h1v1h-1zM6 7h2v1h-2zM9 7h1v1h-1zM1 8h1v1h-1zM4 8h1v1h-1zM6 8h1v1h-1zM8 8h1v1h-1zM10 8h1v1h-1zM1 9h1v1h-1zM3 9h1v1h-1zM6 9h1v1h-1zM8 9h1v1h-1zM10 9h1v1h-1zM1 10h1v1h-1zM5 10h2v1h-2z"/><path id="g12_52a0" d="M2 0h1v1h-1zM2 1h1v1h-1zM0 2h6v1h-6zM7 2h4v1h-4zM2 3h1v1h-1zM5 3h1v1h-1zM7 3h1v1h-1zM10 3h1v1h-1zM2 4h1v1h-1zM5 4h1v1h-1zM7 4h1v1h-1zM10 4h1v1h-1zM2 5h1v1h-1zM5 5h1v1h-1zM7 5h1v1h-1zM10 5h1v1h-1zM2 6h1v1h-1zM5 6h1v1h-1zM7 6h1v1h-1zM10 6h1v1h-1zM2 7h1v1h-1zM5 7h1v1h-1zM7 7h1v1h-1zM10 7h1v1h-1zM1 8h1v1h-1zM5 8h1v1h-1zM7 8h1v1h-1zM10 8h1v1h-1zM1 9h1v1h-1zM3 9h1v1h-1zM5 9h1v1h-1zM7 9h4v1h-4zM0 10h1v1h-1zM4 10h1v1h-1zM7 10h1v1h-1zM10 10h1v1h-1z"/><path id="g12_4fee" d="M3 0h1v1h-1zM6 0h1v1h-1zM3 1h1v1h-1zM6 1h5v1h-5zM2 2h1v1h-1zM4 2h2v1h-2zM7 2h1v1h-1zM9 2h1v1h-1zM2 3h1v1h-1zM4 3h1v1h-1zM8 3h1v1h-1zM1 4h2v1h-2zM4 4h1v1h-1zM6 4h2v1h-2zM9 4h1v1h-1zM0 5h1v1h-1zM2 5h1v1h-1zM4 5h2v1h-2zM8 5h1v1h-1zM10 5h1v1h-1zM2 6h1v1h-1zM4 6h1v1h-1zM7 6h1v1h-1zM9 6h1v1h-1zM2 7h1v1h-1zM4 7h1v1h-1zM6 7h1v1h-1zM8 7h1v1h-1zM2 8h1v1h-1zM4 8h1v1h-1zM7 8h1v1h-1zM10 8h1v1h-1zM2 9h1v1h-1zM8 9h2v1h-2zM2 10h1v1h-1zM5 10h3v1h-3z"/><path id="g12_6539" d="M7 0h1v1h-1zM0 1h5v1h-5zM7 1h1v1h-1zM4 2h1v1h-1zM6 2h5v1h-5zM4 3h2v1h-2zM9 3h1v1h-1zM1 4h4v1h-4zM6 4h1v1h-1zM9 4h1v1h-1zM1 5h1v1h-1zM6 5h1v1h-1zM9 5h1v1h-1zM1 6h1v1h-1zM6 6h1v1h-1zM9 6h1v1h-1zM1 7h1v1h-1zM7 7h2v1h-2zM1 8h1v1h-1zM3 8h1v1h-1zM7 8h2v1h-2zM1 9h2v1h-2zM6 9h1v1h-1zM9 9h1v1h-1zM1 10h1v1h-1zM4 10h2v1h-2zM10 10h1v1h-1z"/><path id="g12_5220" d="M0 0h3v1h-3zM4 0h3v1h-3zM10 0h1v1h-1zM0 1h1v1h-1zM2 1h1v1h-1zM4 1h1v1h-1zM6 1h1v1h-1zM8 1h1v1h-1zM10 1h1v1h-1zM0 2h1v1h-1zM2 2h1v1h-1zM4 2h1v1h-1zM6 2h1v1h-1zM8 2h1v1h-1zM10 2h1v1h-1zM0 3h1v1h-1zM2 3h1v1h-1zM4 3h1v1h-1zM6 3h1v1h-1zM8 3h1v1h-1zM10 3h1v1h-1zM0 4h9v1h-9zM10 4h1v1h-1zM0 5h1v1h-1zM2 5h1v1h-1zM4 5h1v1h-1zM6 5h1v1h-1zM8 5h1v1h-1zM10 5h1v1h-1zM0 6h1v1h-1zM2 6h1v1h-1zM4 6h1v1h-1zM6 6h1v1h-1zM8 6h1v1h-1zM10 6h1v1h-1zM0 7h1v1h-1zM2 7h1v1h-1zM4 7h1v1h-1zM6 7h1v1h-1zM8 7h1v1h-1zM10 7h1v1h-1zM0 8h1v1h-1zM2 8h1v1h-1zM4 8h1v1h-1zM6 8h1v1h-1zM10 8h1v1h-1zM0 9h1v1h-1zM2 9h1v1h-1zM4 9h1v1h-1zM6 9h1v1h-1zM10 9h1v1h-1zM0 10h1v1h-1zM2 10h2v1h-2zM5 10h2v1h-2zM8 10h3v1h-3z"/><path id="g12_9664" d="M0 0h4v1h-4zM7 0h1v1h-1zM0 1h1v1h-1zM3 1h1v1h-1zM6 1h1v1h-1zM8 1h1v1h-1zM0 2h1v1h-1zM2 2h1v1h-1zM5 2h1v1h-1zM9 2h1v1h-1zM0 3h2v1h-2zM4 3h1v1h-1zM6 3h3v1h-3zM10 3h1v1h-1zM0 4h1v1h-1zM2 4h1v1h-1zM7 4h1v1h-1zM0 5h1v1h-1zM3 5h8v1h-8zM0 6h1v1h-1zM3 6h1v1h-1zM7 6h1v1h-1zM0 7h3v1h-3zM5 7h1v1h-1zM7 7h1v1h-1zM9 7h1v1h-1zM0 8h1v1h-1zM4 8h1v1h-1zM7 8h1v1h-1zM10 8h1v1h-1zM0 9h1v1h-1zM3 9h1v1h-1zM7 9h1v1h-1zM10 9h1v1h-1zM0 10h1v1h-1zM6 10h2v1h-2z"/><path id="g12_67e5" d="M5 0h1v1h-1zM0 1h11v1h-11zM3 2h1v1h-1zM5 2h1v1h-1zM7 2h1v1h-1zM2 3h1v1h-1zM5 3h1v1h-1zM8 3h1v1h-1zM0 4h11v1h-11zM2 5h1v1h-1zM8 5h1v1h-1zM2 6h7v1h-7zM2 7h1v1h-1zM8 7h1v1h-1zM2 8h7v1h-7zM0 10h11v1h-11z"/><path id="g12_8be2" d="M1 0h1v1h-1zM5 0h1v1h-1zM2 1h1v1h-1zM5 1h6v1h-6zM4 2h1v1h-1zM10 2h1v1h-1zM0 3h4v1h-4zM5 3h4v1h-4zM10 3h1v1h-1zM2 4h1v1h-1zM5 4h1v1h-1zM8 4h1v1h-1zM10 4h1v1h-1zM2 5h1v1h-1zM5 5h4v1h-4zM10 5h1v1h-1zM2 6h1v1h-1zM5 6h1v1h-1zM8 6h1v1h-1zM10 6h1v1h-1zM2 7h1v1h-1zM5 7h1v1h-1zM8 7h1v1h-1zM10 7h1v1h-1zM2 8h2v1h-2zM5 8h4v1h-4zM10 8h1v1h-1zM2 9h1v1h-1zM10 9h1v1h-1zM8 10h2v1h-2z"/><path id="g12_5ba1" d="M5 0h1v1h-1zM0 1h11v1h-11zM0 2h1v1h-1zM5 2h1v1h-1zM10 2h1v1h-1zM1 3h9v1h-9zM1 4h1v1h-1zM5 4h1v1h-1zM9 4h1v1h-1zM1 5h9v1h-9zM1 6h1v1h-1zM5 6h1v1h-1zM9 6h1v1h-1zM1 7h9v1h-9zM1 8h1v1h-1zM5 8h1v1h-1zM9 8h1v1h-1zM5 9h1v1h-1zM5 10h1v1h-1z"/><path id="g12_6838" d="M2 0h1v1h-1zM7 0h1v1h-1zM2 1h1v1h-1zM8 1h1v1h-1zM0 2h11v1h-11zM2 3h1v1h-1zM7 3h1v1h-1zM2 4h1v1h-1zM6 4h1v1h-1zM9 4h1v1h-1zM1 5h3v1h-3zM5 5h4v1h-4zM1 6h2v1h-2zM4 6h1v1h-1zM7 6h1v1h-1zM10 6h1v1h-1zM0 7h1v1h-1zM2 7h1v1h-1zM6 7h1v1h-1zM9 7h1v1h-1zM2 8h1v1h-1zM5 8h1v1h-1zM8 8h1v1h-1zM2 9h1v1h-1zM7 9h1v1h-1zM9 9h1v1h-1zM2 10h1v1h-1zM4 10h3v1h-3zM10 10h1v1h-1z"/><path id="g12_53cd" d="M7 0h3v1h-3zM2 1h5v1h-5zM2 2h1v1h-1zM2 3h1v1h-1zM2 4h8v1h-8zM2 5h1v1h-1zM4 5h1v1h-1zM8 5h1v1h-1zM2 6h1v1h-1zM5 6h1v1h-1zM7 6h1v1h-1zM2 7h1v1h-1zM6 7h1v1h-1zM1 8h1v1h-1zM5 8h1v1h-1zM7 8h1v1h-1zM1 9h1v1h-1zM4 9h1v1h-1zM8 9h1v1h-1zM0 10h1v1h-1zM2 10h2v1h-2zM9 10h2v1h-2z"/><path id="g12_4f5c" d="M3 0h1v1h-1zM5 0h1v1h-1zM3 1h1v1h-1zM5 1h1v1h-1zM2 2h1v1h-1zM5 2h6v1h-6zM2 3h1v1h-1zM4 3h1v1h-1zM6 3h1v1h-1zM1 4h3v1h-3zM6 4h1v1h-1zM0 5h1v1h-1zM2 5h1v1h-1zM6 5h4v1h-4zM2 6h1v1h-1zM6 6h1v1h-1zM2 7h1v1h-1zM6 7h1v1h-1zM2 8h1v1h-1zM6 8h5v1h-5zM2 9h1v1h-1zM6 9h1v1h-1zM2 10h1v1h-1zM6 10h1v1h-1z"/><path id="g12_5e9f" d="M6 0h1v1h-1zM2 1h9v1h-9zM2 2h1v1h-1zM4 2h1v1h-1zM6 2h1v1h-1zM8 2h1v1h-1zM2 3h1v1h-1zM4 3h1v1h-1zM6 3h1v1h-1zM9 3h1v1h-1zM2 4h9v1h-9zM2 5h1v1h-1zM5 5h1v1h-1zM2 6h1v1h-1zM5 6h5v1h-5zM2 7h1v1h-1zM4 7h1v1h-1zM6 7h1v1h-1zM9 7h1v1h-1zM2 8h2v1h-2zM7 8h2v1h-2zM1 9h1v1h-1zM6 9h1v1h-1zM9 9h1v1h-1zM0 10h1v1h-1zM4 10h2v1h-2zM10 10h1v1h-1z"/><path id="g12_6253" d="M2 0h1v1h-1zM2 1h1v1h-1zM5 1h6v1h-6zM0 2h5v1h-5zM8 2h1v1h-1zM2 3h1v1h-1zM8 3h1v1h-1zM2 4h1v1h-1zM4 4h1v1h-1zM8 4h1v1h-1zM2 5h2v1h-2zM8 5h1v1h-1zM1 6h2v1h-2zM8 6h1v1h-1zM0 7h1v1h-1zM2 7h1v1h-1zM8 7h1v1h-1zM2 8h1v1h-1zM8 8h1v1h-1zM2 9h1v1h-1zM8 9h1v1h-1zM0 10h3v1h-3zM6 10h3v1h-3z"/><path id="g12_5370" d="M4 0h1v1h-1zM1 1h3v1h-3zM6 1h5v1h-5zM1 2h1v1h-1zM6 2h1v1h-1zM10 2h1v1h-1zM1 3h1v1h-1zM6 3h1v1h-1zM10 3h1v1h-1zM1 4h4v1h-4zM6 4h1v1h-1zM10 4h1v1h-1zM1 5h1v1h-1zM6 5h1v1h-1zM10 5h1v1h-1zM1 6h1v1h-1zM6 6h1v1h-1zM10 6h1v1h-1zM1 7h1v1h-1zM4 7h1v1h-1zM6 7h1v1h-1zM10 7h1v1h-1zM1 8h3v1h-3zM6 8h1v1h-1zM8 8h2v1h-2zM1 9h1v1h-1zM6 9h1v1h-1zM6 10h1v1h-1z"/><path id="g12_5bfc" d="M2 0h7v1h-7zM2 1h1v1h-1zM8 1h1v1h-1zM2 2h7v1h-7zM10 2h1v1h-1zM2 3h1v1h-1zM10 3h1v1h-1zM3 4h8v1h-8zM7 5h1v1h-1zM0 6h11v1h-11zM3 7h1v1h-1zM7 7h1v1h-1zM4 8h1v1h-1zM7 8h1v1h-1zM4 9h1v1h-1zM7 9h1v1h-1zM6 10h2v1h-2z"/><path id="g12_51fa" d="M5 0h1v1h-1zM1 1h1v1h-1zM5 1h1v1h-1zM9 1h1v1h-1zM1 2h1v1h-1zM5 2h1v1h-1zM9 2h1v1h-1zM1 3h1v1h-1zM5 3h1v1h-1zM9 3h1v1h-1zM1 4h9v1h-9zM5 5h1v1h-1zM0 6h1v1h-1zM5 6h1v1h-1zM10 6h1v1h-1zM0 7h1v1h-1zM5 7h1v1h-1zM10 7h1v1h-1zM0 8h1v1h-1zM5 8h1v1h-1zM10 8h1v1h-1zM0 9h1v1h-1zM5 9h1v1h-1zM10 9h1v1h-1zM0 10h11v1h-11z"/><path id="g12_7f51" d="M1 0h10v1h-10zM1 1h1v1h-1zM10 1h1v1h-1zM1 2h1v1h-1zM4 2h1v1h-1zM8 2h1v1h-1zM10 2h1v1h-1zM1 3h2v1h-2zM4 3h1v1h-1zM6 3h1v1h-1zM8 3h1v1h-1zM10 3h1v1h-1zM1 4h1v1h-1zM3 4h1v1h-1zM7 4h1v1h-1zM10 4h1v1h-1zM1 5h1v1h-1zM4 5h1v1h-1zM7 5h1v1h-1zM10 5h1v1h-1zM1 6h1v1h-1zM3 6h1v1h-1zM5 6h2v1h-2zM8 6h1v1h-1zM10 6h1v1h-1zM1 7h2v1h-2zM6 7h1v1h-1zM8 7h1v1h-1zM10 7h1v1h-1zM1 8h1v1h-1zM5 8h1v1h-1zM10 8h1v1h-1zM1 9h1v1h-1zM10 9h1v1h-1zM1 10h1v1h-1zM8 10h3v1h-3z"/><path id="g12_683c" d="M2 0h1v1h-1zM6 0h1v1h-1zM2 1h1v1h-1zM6 1h4v1h-4zM0 2h4v1h-4zM5 2h1v1h-1zM9 2h1v1h-1zM2 3h1v1h-1zM4 3h1v1h-1zM6 3h1v1h-1zM8 3h1v1h-1zM2 4h1v1h-1zM7 4h1v1h-1zM1 5h3v1h-3zM6 5h1v1h-1zM8 5h1v1h-1zM1 6h2v1h-2zM4 6h2v1h-2zM9 6h2v1h-2zM0 7h1v1h-1zM2 7h1v1h-1zM5 7h5v1h-5zM2 8h1v1h-1zM5 8h1v1h-1zM9 8h1v1h-1zM2 9h1v1h-1zM5 9h1v1h-1zM9 9h1v1h-1zM2 10h1v1h-1zM5 10h5v1h-5z"/><path id="g12_5217" d="M1 0h6v1h-6zM10 0h1v1h-1zM3 1h1v1h-1zM10 1h1v1h-1zM3 2h1v1h-1zM7 2h1v1h-1zM10 2h1v1h-1zM2 3h4v1h-4zM7 3h1v1h-1zM10 3h1v1h-1zM2 4h1v1h-1zM5 4h1v1h-1zM7 4h1v1h-1zM10 4h1v1h-1zM1 5h2v1h-2zM5 5h1v1h-1zM7 5h1v1h-1zM10 5h1v1h-1zM0 6h1v1h-1zM3 6h2v1h-2zM7 6h1v1h-1zM10 6h1v1h-1zM4 7h1v1h-1zM7 7h1v1h-1zM10 7h1v1h-1zM3 8h1v1h-1zM10 8h1v1h-1zM2 9h1v1h-1zM10 9h1v1h-1zM0 10h2v1h-2zM8 10h3v1h-3z"/><path id="g12_9000" d="M0 0h1v1h-1zM4 0h6v1h-6zM1 1h1v1h-1zM4 1h1v1h-1zM9 1h1v1h-1zM1 2h1v1h-1zM4 2h6v1h-6zM4 3h1v1h-1zM9 3h1v1h-1zM0 4h2v1h-2zM4 4h6v1h-6zM1 5h1v1h-1zM4 5h1v1h-1zM1 6h1v1h-1zM4 6h1v1h-1zM6 6h2v1h-2zM9 6h1v1h-1zM1 7h1v1h-1zM4 7h1v1h-1zM8 7h1v1h-1zM1 8h1v1h-1zM4 8h3v1h-3zM9 8h1v1h-1zM0 9h1v1h-1zM2 9h2v1h-2zM0 10h1v1h-1zM4 10h7v1h-7z"/><path id="g12_5355" d="M3 0h1v1h-1zM7 0h1v1h-1zM4 1h1v1h-1zM6 1h1v1h-1zM1 2h9v1h-9zM1 3h1v1h-1zM5 3h1v1h-1zM9 3h1v1h-1zM1 4h9v1h-9zM1 5h1v1h-1zM5 5h1v1h-1zM9 5h1v1h-1zM1 6h9v1h-9zM5 7h1v1h-1zM0 8h11v1h-11zM5 9h1v1h-1zM5 10h1v1h-1z"/><path id="g12_636e" d="M2 0h1v1h-1zM5 0h6v1h-6zM2 1h1v1h-1zM5 1h1v1h-1zM10 1h1v1h-1zM0 2h6v1h-6zM10 2h1v1h-1zM2 3h1v1h-1zM5 3h6v1h-6zM2 4h1v1h-1zM4 4h2v1h-2zM8 4h1v1h-1zM2 5h2v1h-2zM5 5h6v1h-6zM1 6h2v1h-2zM5 6h1v1h-1zM8 6h1v1h-1zM0 7h1v1h-1zM2 7h1v1h-1zM5 7h6v1h-6zM2 8h1v1h-1zM4 8h3v1h-3zM10 8h1v1h-1zM0 9h1v1h-1zM2 9h1v1h-1zM4 9h1v1h-1zM6 9h1v1h-1zM10 9h1v1h-1zM1 10h1v1h-1zM3 10h1v1h-1zM6 10h5v1h-5z"/><path id="g12_7f16" d="M2 0h1v1h-1zM7 0h1v1h-1zM2 1h1v1h-1zM4 1h7v1h-7zM1 2h1v1h-1zM4 2h1v1h-1zM10 2h1v1h-1zM1 3h1v1h-1zM3 3h8v1h-8zM0 4h3v1h-3zM4 4h1v1h-1zM2 5h1v1h-1zM4 5h7v1h-7zM1 6h1v1h-1zM4 6h1v1h-1zM6 6h1v1h-1zM8 6h1v1h-1zM10 6h1v1h-1zM0 7h11v1h-11zM4 8h1v1h-1zM6 8h1v1h-1zM8 8h1v1h-1zM10 8h1v1h-1zM2 9h3v1h-3zM6 9h1v1h-1zM8 9h1v1h-1zM10 9h1v1h-1zM0 10h2v1h-2zM4 10h1v1h-1zM9 10h2v1h-2z"/><path id="g12_53f7" d="M2 0h7v1h-7zM2 1h1v1h-1zM8 1h1v1h-1zM2 2h7v1h-7zM0 4h11v1h-11zM4 5h1v1h-1zM3 6h6v1h-6zM8 7h1v1h-1zM8 8h1v1h-1zM5 9h1v1h-1zM8 9h1v1h-1zM6 10h2v1h-2z"/><path id="g12_8d27" d="M3 0h1v1h-1zM6 0h1v1h-1zM9 0h1v1h-1zM2 1h1v1h-1zM6 1h3v1h-3zM1 2h2v1h-2zM4 2h3v1h-3zM10 2h1v1h-1zM0 3h1v1h-1zM2 3h1v1h-1zM7 3h4v1h-4zM2 5h7v1h-7zM2 6h1v1h-1zM8 6h1v1h-1zM2 7h1v1h-1zM5 7h1v1h-1zM8 7h1v1h-1zM2 8h1v1h-1zM5 8h1v1h-1zM8 8h1v1h-1zM4 9h1v1h-1zM6 9h1v1h-1zM1 10h3v1h-3zM7 10h3v1h-3z"/><path id="g12_65e5" d="M2 1h7v1h-7zM2 2h1v1h-1zM8 2h1v1h-1zM2 3h1v1h-1zM8 3h1v1h-1zM2 4h1v1h-1zM8 4h1v1h-1zM2 5h7v1h-7zM2 6h1v1h-1zM8 6h1v1h-1zM2 7h1v1h-1zM8 7h1v1h-1zM2 8h1v1h-1zM8 8h1v1h-1zM2 9h7v1h-7zM2 10h1v1h-1zM8 10h1v1h-1z"/><path id="g12_671f" d="M1 0h1v1h-1zM4 0h1v1h-1zM7 0h4v1h-4zM0 1h6v1h-6zM7 1h1v1h-1zM10 1h1v1h-1zM1 2h1v1h-1zM4 2h1v1h-1zM7 2h1v1h-1zM10 2h1v1h-1zM1 3h4v1h-4zM7 3h4v1h-4zM1 4h1v1h-1zM4 4h1v1h-1zM7 4h1v1h-1zM10 4h1v1h-1zM1 5h4v1h-4zM7 5h1v1h-1zM10 5h1v1h-1zM1 6h1v1h-1zM4 6h1v1h-1zM7 6h4v1h-4zM0 7h6v1h-6zM7 7h1v1h-1zM10 7h1v1h-1zM7 8h1v1h-1zM10 8h1v1h-1zM1 9h1v1h-1zM4 9h1v1h-1zM7 9h1v1h-1zM10 9h1v1h-1zM0 10h1v1h-1zM5 10h2v1h-2zM9 10h2v1h-2z"/><path id="g12_4ed3" d="M5 0h1v1h-1zM5 1h2v1h-2zM4 2h1v1h-1zM7 2h1v1h-1zM3 3h1v1h-1zM8 3h1v1h-1zM2 4h6v1h-6zM9 4h1v1h-1zM0 5h2v1h-2zM3 5h1v1h-1zM7 5h1v1h-1zM10 5h1v1h-1zM3 6h1v1h-1zM5 6h1v1h-1zM7 6h1v1h-1zM3 7h1v1h-1zM6 7h1v1h-1zM3 8h1v1h-1zM9 8h1v1h-1zM3 9h1v1h-1zM9 9h1v1h-1zM4 10h6v1h-6z"/><path id="g12_5ba2" d="M5 0h1v1h-1zM1 1h10v1h-10zM1 2h1v1h-1zM4 2h1v1h-1zM10 2h1v1h-1zM3 3h6v1h-6zM2 4h1v1h-1zM4 4h1v1h-1zM7 4h1v1h-1zM1 5h1v1h-1zM5 5h2v1h-2zM3 6h2v1h-2zM7 6h2v1h-2zM1 7h10v1h-10zM3 8h1v1h-1zM8 8h1v1h-1zM3 9h1v1h-1zM8 9h1v1h-1zM3 10h6v1h-6z"/><path id="g12_6237" d="M5 0h1v1h-1zM6 1h1v1h-1zM2 2h8v1h-8zM2 3h1v1h-1zM9 3h1v1h-1zM2 4h1v1h-1zM9 4h1v1h-1zM2 5h8v1h-8zM2 6h1v1h-1zM2 7h1v1h-1zM2 8h1v1h-1zM1 9h1v1h-1zM0 10h1v1h-1z"/><path id="g12_540d" d="M3 0h1v1h-1zM3 1h7v1h-7zM3 2h1v1h-1zM8 2h1v1h-1zM2 3h1v1h-1zM4 3h1v1h-1zM7 3h1v1h-1zM1 4h1v1h-1zM5 4h2v1h-2zM5 5h1v1h-1zM3 6h7v1h-7zM0 7h4v1h-4zM9 7h1v1h-1zM3 8h1v1h-1zM9 8h1v1h-1zM3 9h1v1h-1zM9 9h1v1h-1zM3 10h7v1h-7z"/><path id="g12_79f0" d="M3 0h2v1h-2zM6 0h1v1h-1zM0 1h3v1h-3zM6 1h1v1h-1zM2 2h1v1h-1zM5 2h6v1h-6zM0 3h5v1h-5zM7 3h1v1h-1zM10 3h1v1h-1zM2 4h1v1h-1zM7 4h1v1h-1zM1 5h3v1h-3zM5 5h1v1h-1zM7 5h1v1h-1zM9 5h1v1h-1zM1 6h2v1h-2zM5 6h1v1h-1zM7 6h1v1h-1zM9 6h1v1h-1zM0 7h1v1h-1zM2 7h1v1h-1zM4 7h1v1h-1zM7 7h1v1h-1zM10 7h1v1h-1zM2 8h2v1h-2zM7 8h1v1h-1zM10 8h1v1h-1zM2 9h1v1h-1zM7 9h1v1h-1zM2 10h1v1h-1zM6 10h2v1h-2z"/><path id="g12_603b" d="M3 0h1v1h-1zM7 0h1v1h-1zM4 1h1v1h-1zM6 1h1v1h-1zM2 2h7v1h-7zM2 3h1v1h-1zM8 3h1v1h-1zM2 4h1v1h-1zM8 4h1v1h-1zM2 5h7v1h-7zM2 6h1v1h-1zM8 6h1v1h-1zM5 7h1v1h-1zM9 7h1v1h-1zM1 8h1v1h-1zM3 8h1v1h-1zM6 8h1v1h-1zM8 8h1v1h-1zM10 8h1v1h-1zM1 9h1v1h-1zM3 9h1v1h-1zM8 9h1v1h-1zM10 9h1v1h-1zM0 10h1v1h-1zM4 10h5v1h-5z"/><path id="g12_989d" d="M2 0h1v1h-1zM6 0h5v1h-5zM0 1h6v1h-6zM8 1h1v1h-1zM0 2h1v1h-1zM5 2h6v1h-6zM1 3h4v1h-4zM6 3h1v1h-1zM10 3h1v1h-1zM0 4h2v1h-2zM4 4h1v1h-1zM6 4h1v1h-1zM8 4h1v1h-1zM10 4h1v1h-1zM2 5h2v1h-2zM6 5h1v1h-1zM8 5h1v1h-1zM10 5h1v1h-1zM1 6h1v1h-1zM4 6h1v1h-1zM6 6h1v1h-1zM8 6h1v1h-1zM10 6h1v1h-1zM0 7h7v1h-7zM8 7h1v1h-1zM10 7h1v1h-1zM1 8h1v1h-1zM4 8h1v1h-1zM6 8h1v1h-1zM8 8h1v1h-1zM10 8h1v1h-1zM1 9h4v1h-4zM7 9h1v1h-1zM9 9h1v1h-1zM1 10h1v1h-1zM4 10h3v1h-3zM10 10h1v1h-1z"/><path id="g12_7a0e" d="M3 0h1v1h-1zM5 0h1v1h-1zM9 0h1v1h-1zM0 1h3v1h-3zM6 1h1v1h-1zM8 1h1v1h-1zM2 2h1v1h-1zM5 2h5v1h-5zM0 3h6v1h-6zM9 3h1v1h-1zM2 4h1v1h-1zM5 4h1v1h-1zM9 4h1v1h-1zM1 5h3v1h-3zM5 5h5v1h-5zM1 6h2v1h-2zM4 6h1v1h-1zM6 6h1v1h-1zM8 6h1v1h-1zM0 7h1v1h-1zM2 7h1v1h-1zM6 7h1v1h-1zM8 7h1v1h-1zM2 8h1v1h-1zM6 8h1v1h-1zM8 8h1v1h-1zM10 8h1v1h-1zM2 9h1v1h-1zM5 9h1v1h-1zM8 9h1v1h-1zM10 9h1v1h-1zM2 10h1v1h-1zM4 10h1v1h-1zM8 10h3v1h-3z"/><path id="g12_7387" d="M5 0h1v1h-1zM0 1h11v1h-11zM0 2h1v1h-1zM4 2h1v1h-1zM9 2h1v1h-1zM1 3h1v1h-1zM3 3h1v1h-1zM6 3h1v1h-1zM8 3h1v1h-1zM4 4h2v1h-2zM2 5h1v1h-1zM4 5h1v1h-1zM6 5h1v1h-1zM8 5h1v1h-1zM0 6h2v1h-2zM3 6h5v1h-5zM9 6h1v1h-1zM5 7h1v1h-1zM0 8h11v1h-11zM5 9h1v1h-1zM5 10h1v1h-1z"/><path id="g12_7ed3" d="M2 0h1v1h-1zM7 0h1v1h-1zM2 1h1v1h-1zM7 1h1v1h-1zM1 2h1v1h-1zM4 2h7v1h-7zM1 3h1v1h-1zM3 3h1v1h-1zM7 3h1v1h-1zM0 4h3v1h-3zM5 4h5v1h-5zM2 5h1v1h-1zM1 6h1v1h-1zM5 6h5v1h-5zM0 7h4v1h-4zM5 7h1v1h-1zM9 7h1v1h-1zM4 8h2v1h-2zM9 8h1v1h-1zM2 9h2v1h-2zM5 9h5v1h-5zM0 10h2v1h-2zM5 10h1v1h-1zM9 10h1v1h-1z"/><path id="g12_5e10" d="M2 0h1v1h-1zM6 0h1v1h-1zM9 0h1v1h-1zM2 1h1v1h-1zM6 1h1v1h-1zM9 1h1v1h-1zM0 2h5v1h-5zM6 2h1v1h-1zM8 2h1v1h-1zM0 3h1v1h-1zM2 3h1v1h-1zM4 3h1v1h-1zM6 3h2v1h-2zM0 4h1v1h-1zM2 4h1v1h-1zM4 4h1v1h-1zM6 4h1v1h-1zM0 5h1v1h-1zM2 5h1v1h-1zM4 5h7v1h-7zM0 6h1v1h-1zM2 6h1v1h-1zM4 6h1v1h-1zM6 6h1v1h-1zM8 6h1v1h-1zM0 7h1v1h-1zM2 7h3v1h-3zM6 7h1v1h-1zM8 7h1v1h-1zM2 8h1v1h-1zM6 8h1v1h-1zM9 8h1v1h-1zM2 9h1v1h-1zM6 9h1v1h-1zM8 9h2v1h-2zM2 10h1v1h-1zM6 10h2v1h-2zM10 10h1v1h-1z"/><path id="g12_65b9" d="M4 0h1v1h-1zM5 1h1v1h-1zM0 2h11v1h-11zM4 3h1v1h-1zM4 4h1v1h-1zM4 5h5v1h-5zM3 6h1v1h-1zM8 6h1v1h-1zM3 7h1v1h-1zM8 7h1v1h-1zM2 8h1v1h-1zM8 8h1v1h-1zM1 9h1v1h-1zM8 9h1v1h-1zM0 10h1v1h-1zM5 10h3v1h-3z"/><path id="g12_5f0f" d="M6 0h1v1h-1zM8 0h1v1h-1zM6 1h1v1h-1zM9 1h1v1h-1zM6 2h1v1h-1zM0 3h11v1h-11zM6 4h1v1h-1zM1 5h4v1h-4zM6 5h1v1h-1zM3 6h1v1h-1zM6 6h1v1h-1zM3 7h1v1h-1zM7 7h1v1h-1zM3 8h1v1h-1zM7 8h1v1h-1zM10 8h1v1h-1zM3 9h2v1h-2zM8 9h1v1h-1zM10 9h1v1h-1zM0 10h3v1h-3zM9 10h2v1h-2z"/><path id="g12_6b3e" d="M3 0h1v1h-1zM7 0h1v1h-1zM0 1h6v1h-6zM7 1h1v1h-1zM3 2h1v1h-1zM7 2h4v1h-4zM1 3h4v1h-4zM6 3h1v1h-1zM10 3h1v1h-1zM8 4h1v1h-1zM10 4h1v1h-1zM1 5h4v1h-4zM8 5h1v1h-1zM8 6h1v1h-1zM0 7h6v1h-6zM8 7h1v1h-1zM1 8h1v1h-1zM3 8h1v1h-1zM5 8h1v1h-1zM7 8h1v1h-1zM9 8h1v1h-1zM0 9h1v1h-1zM3 9h1v1h-1zM6 9h1v1h-1zM9 9h1v1h-1zM1 10h3v1h-3zM5 10h1v1h-1zM10 10h1v1h-1z"/><path id="g12_9650" d="M0 0h4v1h-4zM5 0h5v1h-5zM0 1h1v1h-1zM3 1h1v1h-1zM5 1h1v1h-1zM9 1h1v1h-1zM0 2h1v1h-1zM2 2h1v1h-1zM5 2h5v1h-5zM0 3h2v1h-2zM5 3h1v1h-1zM9 3h1v1h-1zM0 4h1v1h-1zM2 4h1v1h-1zM5 4h5v1h-5zM0 5h1v1h-1zM3 5h1v1h-1zM5 5h1v1h-1zM7 5h1v1h-1zM0 6h1v1h-1zM3 6h1v1h-1zM5 6h1v1h-1zM7 6h1v1h-1zM10 6h1v1h-1zM0 7h2v1h-2zM3 7h1v1h-1zM5 7h1v1h-1zM7 7h1v1h-1zM9 7h1v1h-1zM0 8h1v1h-1zM2 8h1v1h-1zM5 8h1v1h-1zM8 8h1v1h-1zM0 9h1v1h-1zM5 9h1v1h-1zM7 9h1v1h-1zM9 9h1v1h-1zM0 10h1v1h-1zM5 10h2v1h-2zM10 10h1v1h-1z"/><path id="g12_5730" d="M2 0h1v1h-1zM7 0h1v1h-1zM2 1h1v1h-1zM5 1h1v1h-1zM7 1h1v1h-1zM2 2h1v1h-1zM5 2h1v1h-1zM7 2h1v1h-1zM9 2h1v1h-1zM0 3h4v1h-4zM5 3h1v1h-1zM7 3h3v1h-3zM2 4h1v1h-1zM5 4h3v1h-3zM9 4h1v1h-1zM2 5h1v1h-1zM4 5h2v1h-2zM7 5h1v1h-1zM9 5h1v1h-1zM2 6h1v1h-1zM5 6h1v1h-1zM7 6h1v1h-1zM9 6h1v1h-1zM2 7h1v1h-1zM5 7h1v1h-1zM7 7h3v1h-3zM2 8h2v1h-2zM5 8h1v1h-1zM7 8h1v1h-1zM10 8h1v1h-1zM0 9h2v1h-2zM5 9h1v1h-1zM10 9h1v1h-1zM6 10h5v1h-5z"/><path id="g12_5740" d="M2 0h1v1h-1zM7 0h1v1h-1zM2 1h1v1h-1zM7 1h1v1h-1zM2 2h1v1h-1zM7 2h1v1h-1zM0 3h6v1h-6zM7 3h1v1h-1zM2 4h1v1h-1zM5 4h1v1h-1zM7 4h4v1h-4zM2 5h1v1h-1zM5 5h1v1h-1zM7 5h1v1h-1zM2 6h1v1h-1zM5 6h1v1h-1zM7 6h1v1h-1zM2 7h1v1h-1zM5 7h1v1h-1zM7 7h1v1h-1zM2 8h4v1h-4zM7 8h1v1h-1zM0 9h2v1h-2zM5 9h1v1h-1zM7 9h1v1h-1zM3 10h8v1h-8z"/><path id="g12_7535" d="M5 0h1v1h-1zM5 1h1v1h-1zM1 2h9v1h-9zM1 3h1v1h-1zM5 3h1v1h-1zM9 3h1v1h-1zM1 4h9v1h-9zM1 5h1v1h-1zM5 5h1v1h-1zM9 5h1v1h-1zM1 6h1v1h-1zM5 6h1v1h-1zM9 6h1v1h-1zM1 7h9v1h-9zM5 8h1v1h-1zM10 8h1v1h-1zM5 9h1v1h-1zM10 9h1v1h-1zM6 10h5v1h-5z"/><path id="g12_8bdd" d="M1 0h1v1h-1zM8 0h2v1h-2zM2 1h1v1h-1zM5 1h3v1h-3zM7 2h1v1h-1zM0 3h3v1h-3zM4 3h7v1h-7zM2 4h1v1h-1zM7 4h1v1h-1zM2 5h1v1h-1zM7 5h1v1h-1zM2 6h1v1h-1zM5 6h5v1h-5zM2 7h1v1h-1zM5 7h1v1h-1zM9 7h1v1h-1zM2 8h2v1h-2zM5 8h1v1h-1zM9 8h1v1h-1zM2 9h1v1h-1zM5 9h5v1h-5zM5 10h1v1h-1zM9 10h1v1h-1z"/><path id="g12_673a" d="M2 0h1v1h-1zM2 1h1v1h-1zM5 1h4v1h-4zM2 2h1v1h-1zM5 2h1v1h-1zM8 2h1v1h-1zM0 3h6v1h-6zM8 3h1v1h-1zM2 4h1v1h-1zM5 4h1v1h-1zM8 4h1v1h-1zM1 5h3v1h-3zM5 5h1v1h-1zM8 5h1v1h-1zM1 6h2v1h-2zM4 6h2v1h-2zM8 6h1v1h-1zM0 7h1v1h-1zM2 7h1v1h-1zM5 7h1v1h-1zM8 7h1v1h-1zM0 8h1v1h-1zM2 8h1v1h-1zM5 8h1v1h-1zM8 8h1v1h-1zM2 9h1v1h-1zM4 9h1v1h-1zM8 9h1v1h-1zM10 9h1v1h-1zM2 10h2v1h-2zM8 10h3v1h-3z"/><path id="g12_68b0" d="M2 0h1v1h-1zM8 0h2v1h-2zM2 1h1v1h-1zM8 1h1v1h-1zM10 1h1v1h-1zM0 2h11v1h-11zM2 3h1v1h-1zM8 3h1v1h-1zM2 4h1v1h-1zM4 4h1v1h-1zM6 4h1v1h-1zM8 4h1v1h-1zM10 4h1v1h-1zM2 5h3v1h-3zM6 5h1v1h-1zM8 5h1v1h-1zM10 5h1v1h-1zM1 6h2v1h-2zM4 6h5v1h-5zM10 6h1v1h-1zM0 7h1v1h-1zM2 7h1v1h-1zM4 7h1v1h-1zM6 7h1v1h-1zM8 7h2v1h-2zM2 8h1v1h-1zM4 8h1v1h-1zM6 8h1v1h-1zM8 8h1v1h-1zM10 8h1v1h-1zM2 9h2v1h-2zM7 9h1v1h-1zM9 9h2v1h-2zM2 10h1v1h-1zM6 10h1v1h-1zM10 10h1v1h-1z"/><path id="g12_4e07" d="M0 1h11v1h-11zM4 2h1v1h-1zM4 3h1v1h-1zM4 4h5v1h-5zM4 5h1v1h-1zM8 5h1v1h-1zM4 6h1v1h-1zM8 6h1v1h-1zM3 7h1v1h-1zM8 7h1v1h-1zM3 8h1v1h-1zM8 8h1v1h-1zM2 9h1v1h-1zM8 9h1v1h-1zM1 10h1v1h-1zM6 10h2v1h-2z"/><path id="g12_535a" d="M1 0h1v1h-1zM6 0h1v1h-1zM9 0h1v1h-1zM1 1h1v1h-1zM3 1h8v1h-8zM1 2h1v1h-1zM6 2h1v1h-1zM0 3h3v1h-3zM4 3h6v1h-6zM1 4h1v1h-1zM4 4h1v1h-1zM6 4h1v1h-1zM9 4h1v1h-1zM1 5h1v1h-1zM4 5h6v1h-6zM1 6h1v1h-1zM4 6h1v1h-1zM6 6h1v1h-1zM9 6h1v1h-1zM1 7h10v1h-10zM1 8h1v1h-1zM4 8h1v1h-1zM8 8h1v1h-1zM1 9h1v1h-1zM5 9h1v1h-1zM8 9h1v1h-1zM1 10h1v1h-1zM7 10h2v1h-2z"/><path id="g12_57f9" d="M2 0h1v1h-1zM6 0h1v1h-1zM2 1h1v1h-1zM7 1h1v1h-1zM2 2h1v1h-1zM4 2h7v1h-7zM0 3h4v1h-4zM5 3h1v1h-1zM9 3h1v1h-1zM2 4h1v1h-1zM6 4h1v1h-1zM8 4h1v1h-1zM2 5h1v1h-1zM4 5h7v1h-7zM2 6h1v1h-1zM2 7h2v1h-2zM5 7h5v1h-5zM0 8h2v1h-2zM5 8h1v1h-1zM9 8h1v1h-1zM5 9h1v1h-1zM9 9h1v1h-1zM5 10h5v1h-5z"/><path id="g12_8bad" d="M1 0h1v1h-1zM5 0h1v1h-1zM10 0h1v1h-1zM2 1h1v1h-1zM5 1h1v1h-1zM7 1h1v1h-1zM10 1h1v1h-1zM5 2h1v1h-1zM7 2h1v1h-1zM10 2h1v1h-1zM0 3h3v1h-3zM5 3h1v1h-1zM7 3h1v1h-1zM10 3h1v1h-1zM2 4h1v1h-1zM5 4h1v1h-1zM7 4h1v1h-1zM10 4h1v1h-1zM2 5h1v1h-1zM5 5h1v1h-1zM7 5h1v1h-1zM10 5h1v1h-1zM2 6h1v1h-1zM5 6h1v1h-1zM7 6h1v1h-1zM10 6h1v1h-1zM2 7h1v1h-1zM4 7h2v1h-2zM7 7h1v1h-1zM10 7h1v1h-1zM2 8h2v1h-2zM5 8h1v1h-1zM7 8h1v1h-1zM10 8h1v1h-1zM2 9h1v1h-1zM5 9h1v1h-1zM10 9h1v1h-1zM4 10h1v1h-1zM10 10h1v1h-1z"/><path id="g12_516c" d="M7 0h1v1h-1zM3 1h1v1h-1zM7 1h1v1h-1zM3 2h1v1h-1zM8 2h1v1h-1zM2 3h1v1h-1zM8 3h1v1h-1zM2 4h1v1h-1zM5 4h1v1h-1zM9 4h1v1h-1zM1 5h1v1h-1zM5 5h1v1h-1zM10 5h1v1h-1zM0 6h1v1h-1zM4 6h1v1h-1zM4 7h1v1h-1zM7 7h1v1h-1zM3 8h1v1h-1zM8 8h1v1h-1zM2 9h8v1h-8zM3 10h1v1h-1zM9 10h1v1h-1z"/><path id="g12_53f8" d="M1 0h9v1h-9zM9 1h1v1h-1zM0 2h8v1h-8zM9 2h1v1h-1zM9 3h1v1h-1zM1 4h6v1h-6zM9 4h1v1h-1zM1 5h1v1h-1zM6 5h1v1h-1zM9 5h1v1h-1zM1 6h1v1h-1zM6 6h1v1h-1zM9 6h1v1h-1zM1 7h6v1h-6zM9 7h1v1h-1zM9 8h1v1h-1zM9 9h1v1h-1zM6 10h3v1h-3z"/><path id="g12_5929" d="M1 0h9v1h-9zM5 1h1v1h-1zM5 2h1v1h-1zM5 3h1v1h-1zM0 4h11v1h-11zM5 5h1v1h-1zM4 6h1v1h-1zM6 6h1v1h-1zM4 7h1v1h-1zM6 7h1v1h-1zM3 8h1v1h-1zM7 8h1v1h-1zM2 9h1v1h-1zM8 9h1v1h-1zM0 10h2v1h-2zM9 10h2v1h-2z"/><path id="g12_5e7f" d="M5 0h1v1h-1zM6 1h1v1h-1zM1 2h10v1h-10zM1 3h1v1h-1zM1 4h1v1h-1zM1 5h1v1h-1zM1 6h1v1h-1zM1 7h1v1h-1zM1 8h1v1h-1zM0 9h1v1h-1zM0 10h1v1h-1z"/><path id="g12_4e1c" d="M5 0h1v1h-1zM5 1h1v1h-1zM1 2h10v1h-10zM4 3h1v1h-1zM6 3h1v1h-1zM3 4h1v1h-1zM6 4h1v1h-1zM2 5h8v1h-8zM6 6h1v1h-1zM3 7h1v1h-1zM6 7h1v1h-1zM8 7h1v1h-1zM2 8h1v1h-1zM6 8h1v1h-1zM9 8h1v1h-1zM1 9h1v1h-1zM6 9h1v1h-1zM10 9h1v1h-1zM4 10h3v1h-3z"/><path id="g12_7701" d="M5 0h1v1h-1zM3 1h1v1h-1zM5 1h1v1h-1zM8 1h1v1h-1zM2 2h1v1h-1zM5 2h1v1h-1zM7 2h1v1h-1zM9 2h2v1h-2zM1 3h1v1h-1zM5 3h2v1h-2zM10 3h1v1h-1zM3 4h6v1h-6zM2 5h2v1h-2zM8 5h1v1h-1zM0 6h2v1h-2zM3 6h6v1h-6zM3 7h1v1h-1zM8 7h1v1h-1zM3 8h6v1h-6zM3 9h1v1h-1zM8 9h1v1h-1zM3 10h6v1h-6z"/><path id="g12_6df1" d="M1 0h1v1h-1zM4 0h7v1h-7zM2 1h1v1h-1zM4 1h1v1h-1zM10 1h1v1h-1zM5 2h1v1h-1zM8 2h1v1h-1zM0 3h1v1h-1zM4 3h1v1h-1zM7 3h1v1h-1zM9 3h1v1h-1zM1 4h1v1h-1zM7 4h1v1h-1zM2 5h1v1h-1zM4 5h7v1h-7zM2 6h1v1h-1zM7 6h1v1h-1zM0 7h2v1h-2zM6 7h3v1h-3zM1 8h1v1h-1zM5 8h1v1h-1zM7 8h1v1h-1zM9 8h1v1h-1zM1 9h1v1h-1zM3 9h2v1h-2zM7 9h1v1h-1zM10 9h1v1h-1zM1 10h1v1h-1zM7 10h1v1h-1z"/><path id="g12_5733" d="M2 0h1v1h-1zM5 0h1v1h-1zM10 0h1v1h-1zM2 1h1v1h-1zM5 1h1v1h-1zM7 1h1v1h-1zM10 1h1v1h-1zM2 2h1v1h-1zM5 2h1v1h-1zM7 2h1v1h-1zM10 2h1v1h-1zM0 3h6v1h-6zM7 3h1v1h-1zM10 3h1v1h-1zM2 4h1v1h-1zM5 4h1v1h-1zM7 4h1v1h-1zM10 4h1v1h-1zM2 5h1v1h-1zM5 5h1v1h-1zM7 5h1v1h-1zM10 5h1v1h-1zM2 6h1v1h-1zM5 6h1v1h-1zM7 6h1v1h-1zM10 6h1v1h-1zM2 7h4v1h-4zM7 7h1v1h-1zM10 7h1v1h-1zM0 8h2v1h-2zM4 8h1v1h-1zM7 8h1v1h-1zM10 8h1v1h-1zM3 9h1v1h-1zM10 9h1v1h-1zM2 10h1v1h-1zM10 10h1v1h-1z"/><path id="g12_5e02" d="M5 0h1v1h-1zM5 1h1v1h-1zM0 2h11v1h-11zM5 3h1v1h-1zM2 4h8v1h-8zM2 5h1v1h-1zM5 5h1v1h-1zM9 5h1v1h-1zM2 6h1v1h-1zM5 6h1v1h-1zM9 6h1v1h-1zM2 7h1v1h-1zM5 7h1v1h-1zM9 7h1v1h-1zM2 8h1v1h-1zM5 8h1v1h-1zM7 8h1v1h-1zM9 8h1v1h-1zM2 9h1v1h-1zM5 9h1v1h-1zM8 9h1v1h-1zM5 10h1v1h-1z"/><path id="g12_65b0" d="M3 0h1v1h-1zM9 0h2v1h-2zM0 1h6v1h-6zM7 1h2v1h-2zM1 2h1v1h-1zM5 2h1v1h-1zM7 2h1v1h-1zM2 3h1v1h-1zM4 3h1v1h-1zM7 3h1v1h-1zM0 4h6v1h-6zM7 4h4v1h-4zM3 5h1v1h-1zM7 5h1v1h-1zM9 5h1v1h-1zM0 6h6v1h-6zM7 6h1v1h-1zM9 6h1v1h-1zM3 7h1v1h-1zM7 7h1v1h-1zM9 7h1v1h-1zM1 8h1v1h-1zM3 8h1v1h-1zM5 8h1v1h-1zM7 8h1v1h-1zM9 8h1v1h-1zM0 9h1v1h-1zM3 9h1v1h-1zM6 9h1v1h-1zM9 9h1v1h-1zM2 10h2v1h-2zM5 10h1v1h-1zM9 10h1v1h-1z"/><path id="g12_79d1" d="M3 0h2v1h-2zM9 0h1v1h-1zM0 1h3v1h-3zM6 1h1v1h-1zM9 1h1v1h-1zM2 2h1v1h-1zM7 2h1v1h-1zM9 2h1v1h-1zM0 3h5v1h-5zM9 3h1v1h-1zM2 4h1v1h-1zM6 4h1v1h-1zM9 4h1v1h-1zM2 5h2v1h-2zM7 5h1v1h-1zM9 5h1v1h-1zM1 6h2v1h-2zM4 6h1v1h-1zM9 6h2v1h-2zM0 7h1v1h-1zM2 7h1v1h-1zM7 7h3v1h-3zM2 8h1v1h-1zM5 8h2v1h-2zM9 8h1v1h-1zM2 9h1v1h-1zM9 9h1v1h-1zM2 10h1v1h-1zM9 10h1v1h-1z"/><path id="g12_6280" d="M2 0h1v1h-1zM7 0h1v1h-1zM2 1h1v1h-1zM7 1h1v1h-1zM0 2h11v1h-11zM2 3h1v1h-1zM7 3h1v1h-1zM2 4h1v1h-1zM4 4h6v1h-6zM2 5h2v1h-2zM5 5h1v1h-1zM9 5h1v1h-1zM1 6h2v1h-2zM5 6h1v1h-1zM9 6h1v1h-1zM0 7h1v1h-1zM2 7h1v1h-1zM6 7h1v1h-1zM8 7h1v1h-1zM2 8h1v1h-1zM7 8h1v1h-1zM2 9h1v1h-1zM6 9h1v1h-1zM8 9h1v1h-1zM0 10h3v1h-3zM4 10h2v1h-2zM9 10h2v1h-2z"/><path id="g12_6709" d="M4 0h1v1h-1zM0 1h11v1h-11zM3 2h1v1h-1zM3 3h6v1h-6zM2 4h2v1h-2zM8 4h1v1h-1zM1 5h1v1h-1zM3 5h6v1h-6zM0 6h1v1h-1zM3 6h1v1h-1zM8 6h1v1h-1zM3 7h6v1h-6zM3 8h1v1h-1zM8 8h1v1h-1zM3 9h1v1h-1zM8 9h1v1h-1zM3 10h1v1h-1zM7 10h2v1h-2z"/><path id="g12_786c" d="M5 0h6v1h-6zM0 1h4v1h-4zM7 1h1v1h-1zM2 2h1v1h-1zM5 2h6v1h-6zM2 3h1v1h-1zM5 3h1v1h-1zM7 3h1v1h-1zM10 3h1v1h-1zM1 4h3v1h-3zM5 4h6v1h-6zM0 5h2v1h-2zM3 5h1v1h-1zM5 5h1v1h-1zM7 5h1v1h-1zM10 5h1v1h-1zM1 6h1v1h-1zM3 6h1v1h-1zM5 6h6v1h-6zM1 7h1v1h-1zM3 7h2v1h-2zM7 7h1v1h-1zM1 8h3v1h-3zM5 8h1v1h-1zM7 8h1v1h-1zM1 9h1v1h-1zM3 9h1v1h-1zM6 9h2v1h-2zM4 10h2v1h-2zM8 10h3v1h-3z"/><path id="g12_4ef6" d="M3 0h1v1h-1zM7 0h1v1h-1zM3 1h1v1h-1zM5 1h1v1h-1zM7 1h1v1h-1zM2 2h1v1h-1zM5 2h1v1h-1zM7 2h1v1h-1zM2 3h1v1h-1zM4 3h6v1h-6zM1 4h3v1h-3zM7 4h1v1h-1zM0 5h1v1h-1zM2 5h1v1h-1zM7 5h1v1h-1zM2 6h1v1h-1zM4 6h7v1h-7zM2 7h1v1h-1zM7 7h1v1h-1zM2 8h1v1h-1zM7 8h1v1h-1zM2 9h1v1h-1zM7 9h1v1h-1zM2 10h1v1h-1zM7 10h1v1h-1z"/><path id="g12_5174" d="M4 0h1v1h-1zM9 0h1v1h-1zM1 1h1v1h-1zM5 1h1v1h-1zM9 1h1v1h-1zM2 2h1v1h-1zM5 2h1v1h-1zM8 2h1v1h-1zM2 3h1v1h-1zM8 3h1v1h-1zM7 4h1v1h-1zM0 5h11v1h-11zM3 7h1v1h-1zM7 7h1v1h-1zM3 8h1v1h-1zM8 8h1v1h-1zM2 9h1v1h-1zM9 9h1v1h-1zM1 10h1v1h-1zM9 10h1v1h-1z"/><path id="g12_534e" d="M3 0h1v1h-1zM6 0h1v1h-1zM9 0h1v1h-1zM2 1h1v1h-1zM6 1h1v1h-1zM8 1h1v1h-1zM1 2h2v1h-2zM6 2h2v1h-2zM0 3h1v1h-1zM2 3h1v1h-1zM4 3h3v1h-3zM10 3h1v1h-1zM2 4h1v1h-1zM6 4h1v1h-1zM10 4h1v1h-1zM2 5h1v1h-1zM7 5h4v1h-4zM5 6h1v1h-1zM0 7h11v1h-11zM5 8h1v1h-1zM5 9h1v1h-1zM5 10h1v1h-1z"/><path id="g12_5b50" d="M2 0h7v1h-7zM7 1h1v1h-1zM6 2h1v1h-1zM5 3h1v1h-1zM5 4h1v1h-1zM0 5h11v1h-11zM5 6h1v1h-1zM5 7h1v1h-1zM5 8h1v1h-1zM3 9h1v1h-1zM5 9h1v1h-1zM4 10h1v1h-1z"/><path id="g12_73b0" d="M5 0h5v1h-5zM0 1h4v1h-4zM5 1h1v1h-1zM9 1h1v1h-1zM2 2h1v1h-1zM5 2h1v1h-1zM7 2h1v1h-1zM9 2h1v1h-1zM2 3h1v1h-1zM5 3h1v1h-1zM7 3h1v1h-1zM9 3h1v1h-1zM0 4h4v1h-4zM5 4h1v1h-1zM7 4h1v1h-1zM9 4h1v1h-1zM2 5h1v1h-1zM5 5h1v1h-1zM7 5h1v1h-1zM9 5h1v1h-1zM2 6h1v1h-1zM5 6h1v1h-1zM7 6h1v1h-1zM9 6h1v1h-1zM2 7h2v1h-2zM6 7h1v1h-1zM8 7h1v1h-1zM0 8h2v1h-2zM6 8h1v1h-1zM8 8h1v1h-1zM10 8h1v1h-1zM5 9h1v1h-1zM8 9h1v1h-1zM10 9h1v1h-1zM3 10h2v1h-2zM8 10h3v1h-3z"/><path id="g12_91d1" d="M5 0h1v1h-1zM4 1h1v1h-1zM6 1h1v1h-1zM3 2h1v1h-1zM7 2h1v1h-1zM2 3h1v1h-1zM8 3h1v1h-1zM0 4h2v1h-2zM3 4h5v1h-5zM9 4h2v1h-2zM5 5h1v1h-1zM1 6h9v1h-9zM5 7h1v1h-1zM2 8h1v1h-1zM5 8h1v1h-1zM8 8h1v1h-1zM3 9h1v1h-1zM5 9h1v1h-1zM7 9h1v1h-1zM0 10h11v1h-11z"/><path id="g12_8bb0" d="M1 0h1v1h-1zM2 1h1v1h-1zM5 1h5v1h-5zM9 2h1v1h-1zM9 3h1v1h-1zM0 4h3v1h-3zM9 4h1v1h-1zM2 5h1v1h-1zM5 5h5v1h-5zM2 6h1v1h-1zM5 6h1v1h-1zM2 7h1v1h-1zM5 7h1v1h-1zM2 8h1v1h-1zM4 8h2v1h-2zM10 8h1v1h-1zM2 9h2v1h-2zM5 9h1v1h-1zM10 9h1v1h-1zM2 10h1v1h-1zM6 10h5v1h-5z"/><path id="g12_5f55" d="M2 0h7v1h-7zM8 1h1v1h-1zM2 2h7v1h-7zM8 3h1v1h-1zM0 4h11v1h-11zM2 5h1v1h-1zM5 5h1v1h-1zM9 5h1v1h-1zM3 6h1v1h-1zM5 6h2v1h-2zM8 6h1v1h-1zM4 7h2v1h-2zM7 7h1v1h-1zM2 8h2v1h-2zM5 8h1v1h-1zM8 8h1v1h-1zM0 9h2v1h-2zM5 9h1v1h-1zM9 9h2v1h-2zM4 10h2v1h-2z"/><path id="g12_6570" d="M0 0h1v1h-1zM3 0h1v1h-1zM5 0h1v1h-1zM7 0h1v1h-1zM1 1h1v1h-1zM3 1h2v1h-2zM7 1h1v1h-1zM0 2h6v1h-6zM7 2h4v1h-4zM2 3h2v1h-2zM6 3h2v1h-2zM9 3h1v1h-1zM1 4h1v1h-1zM3 4h2v1h-2zM7 4h1v1h-1zM9 4h1v1h-1zM0 5h1v1h-1zM3 5h1v1h-1zM5 5h1v1h-1zM7 5h1v1h-1zM9 5h1v1h-1zM0 6h6v1h-6zM7 6h1v1h-1zM9 6h1v1h-1zM2 7h1v1h-1zM4 7h1v1h-1zM7 7h1v1h-1zM9 7h1v1h-1zM1 8h2v1h-2zM4 8h1v1h-1zM8 8h1v1h-1zM3 9h1v1h-1zM7 9h1v1h-1zM9 9h1v1h-1zM0 10h3v1h-3zM4 10h3v1h-3zM10 10h1v1h-1z"/><path id="g12_5546" d="M5 0h1v1h-1zM0 1h11v1h-11zM3 2h1v1h-1zM7 2h1v1h-1zM1 3h9v1h-9zM1 4h1v1h-1zM4 4h1v1h-1zM6 4h1v1h-1zM9 4h1v1h-1zM1 5h1v1h-1zM3 5h1v1h-1zM7 5h1v1h-1zM9 5h1v1h-1zM1 6h9v1h-9zM1 7h1v1h-1zM3 7h1v1h-1zM7 7h1v1h-1zM9 7h1v1h-1zM1 8h1v1h-1zM3 8h5v1h-5zM9 8h1v1h-1zM1 9h1v1h-1zM3 9h1v1h-1zM7 9h1v1h-1zM9 9h1v1h-1zM1 10h1v1h-1zM8 10h2v1h-2z"/><path id="g12_54c1" d="M3 0h6v1h-6zM3 1h1v1h-1zM8 1h1v1h-1zM3 2h1v1h-1zM8 2h1v1h-1zM3 3h6v1h-6zM1 5h4v1h-4zM7 5h4v1h-4zM1 6h1v1h-1zM4 6h1v1h-1zM7 6h1v1h-1zM10 6h1v1h-1zM1 7h1v1h-1zM4 7h1v1h-1zM7 7h1v1h-1zM10 7h1v1h-1zM1 8h1v1h-1zM4 8h1v1h-1zM7 8h1v1h-1zM10 8h1v1h-1zM1 9h4v1h-4zM7 9h4v1h-4zM1 10h1v1h-1zM4 10h1v1h-1zM7 10h1v1h-1zM10 10h1v1h-1z"/><path id="g12_89c4" d="M2 0h1v1h-1zM5 0h5v1h-5zM2 1h1v1h-1zM5 1h1v1h-1zM9 1h1v1h-1zM0 2h6v1h-6zM7 2h1v1h-1zM9 2h1v1h-1zM2 3h1v1h-1zM5 3h1v1h-1zM7 3h1v1h-1zM9 3h1v1h-1zM2 4h1v1h-1zM5 4h1v1h-1zM7 4h1v1h-1zM9 4h1v1h-1zM0 5h6v1h-6zM7 5h1v1h-1zM9 5h1v1h-1zM2 6h1v1h-1zM5 6h1v1h-1zM7 6h1v1h-1zM9 6h1v1h-1zM2 7h2v1h-2zM7 7h2v1h-2zM2 8h1v1h-1zM4 8h1v1h-1zM6 8h1v1h-1zM8 8h1v1h-1zM10 8h1v1h-1zM1 9h1v1h-1zM5 9h1v1h-1zM8 9h1v1h-1zM10 9h1v1h-1zM0 10h1v1h-1zM3 10h2v1h-2zM9 10h2v1h-2z"/><path id="g12_5206" d="M3 0h1v1h-1zM7 0h1v1h-1zM3 1h1v1h-1zM7 1h1v1h-1zM2 2h1v1h-1zM8 2h1v1h-1zM2 3h1v1h-1zM8 3h1v1h-1zM1 4h1v1h-1zM9 4h1v1h-1zM0 5h1v1h-1zM2 5h7v1h-7zM10 5h1v1h-1zM4 6h1v1h-1zM8 6h1v1h-1zM4 7h1v1h-1zM8 7h1v1h-1zM3 8h1v1h-1zM8 8h1v1h-1zM2 9h1v1h-1zM8 9h1v1h-1zM0 10h2v1h-2zM6 10h2v1h-2z"/><path id="g12_7c7b" d="M2 0h1v1h-1zM5 0h1v1h-1zM8 0h1v1h-1zM3 1h1v1h-1zM5 1h1v1h-1zM7 1h1v1h-1zM0 2h11v1h-11zM3 3h1v1h-1zM5 3h1v1h-1zM7 3h1v1h-1zM2 4h1v1h-1zM5 4h1v1h-1zM8 4h1v1h-1zM1 5h1v1h-1zM9 5h1v1h-1zM5 6h1v1h-1zM0 7h11v1h-11zM4 8h1v1h-1zM6 8h1v1h-1zM3 9h1v1h-1zM7 9h1v1h-1zM0 10h3v1h-3zM8 10h3v1h-3z"/><path id="g12_4f4d" d="M3 0h1v1h-1zM6 0h1v1h-1zM3 1h1v1h-1zM7 1h1v1h-1zM2 2h1v1h-1zM2 3h1v1h-1zM4 3h7v1h-7zM1 4h2v1h-2zM0 5h1v1h-1zM2 5h1v1h-1zM5 5h1v1h-1zM9 5h1v1h-1zM2 6h1v1h-1zM6 6h1v1h-1zM9 6h1v1h-1zM2 7h1v1h-1zM6 7h1v1h-1zM8 7h1v1h-1zM2 8h1v1h-1zM8 8h1v1h-1zM2 9h1v1h-1zM7 9h1v1h-1zM2 10h1v1h-1zM4 10h7v1h-7z"/><path id="g12_91cf" d="M2 0h7v1h-7zM2 1h1v1h-1zM8 1h1v1h-1zM2 2h7v1h-7zM2 3h1v1h-1zM8 3h1v1h-1zM0 4h11v1h-11zM2 5h1v1h-1zM5 5h1v1h-1zM8 5h1v1h-1zM2 6h7v1h-7zM2 7h1v1h-1zM5 7h1v1h-1zM8 7h1v1h-1zM1 8h9v1h-9zM5 9h1v1h-1zM0 10h11v1h-11z"/><path id="g12_4ef7" d="M3 0h1v1h-1zM6 0h1v1h-1zM3 1h1v1h-1zM6 1h2v1h-2zM2 2h1v1h-1zM5 2h1v1h-1zM8 2h1v1h-1zM2 3h3v1h-3zM9 3h2v1h-2zM1 4h2v1h-2zM5 4h1v1h-1zM8 4h1v1h-1zM0 5h1v1h-1zM2 5h1v1h-1zM5 5h1v1h-1zM8 5h1v1h-1zM2 6h1v1h-1zM5 6h1v1h-1zM8 6h1v1h-1zM2 7h1v1h-1zM5 7h1v1h-1zM8 7h1v1h-1zM2 8h1v1h-1zM5 8h1v1h-1zM8 8h1v1h-1zM2 9h1v1h-1zM4 9h1v1h-1zM8 9h1v1h-1zM2 10h2v1h-2zM8 10h1v1h-1z"/><path id="g12_6761" d="M3 0h1v1h-1zM3 1h6v1h-6zM2 2h1v1h-1zM4 2h1v1h-1zM7 2h1v1h-1zM1 3h1v1h-1zM5 3h2v1h-2zM4 4h1v1h-1zM6 4h1v1h-1zM2 5h2v1h-2zM5 5h1v1h-1zM7 5h2v1h-2zM0 6h2v1h-2zM5 6h1v1h-1zM9 6h2v1h-2zM2 7h7v1h-7zM3 8h1v1h-1zM5 8h1v1h-1zM7 8h1v1h-1zM2 9h1v1h-1zM5 9h1v1h-1zM8 9h1v1h-1zM0 10h2v1h-2zM3 10h3v1h-3zM9 10h1v1h-1z"/><path id="g12_5f62" d="M1 0h6v1h-6zM10 0h1v1h-1zM2 1h1v1h-1zM5 1h1v1h-1zM9 1h1v1h-1zM2 2h1v1h-1zM5 2h1v1h-1zM8 2h1v1h-1zM2 3h1v1h-1zM5 3h1v1h-1zM10 3h1v1h-1zM0 4h7v1h-7zM9 4h1v1h-1zM2 5h1v1h-1zM5 5h1v1h-1zM8 5h1v1h-1zM2 6h1v1h-1zM5 6h1v1h-1zM7 6h1v1h-1zM2 7h1v1h-1zM5 7h1v1h-1zM10 7h1v1h-1zM2 8h1v1h-1zM5 8h1v1h-1zM9 8h1v1h-1zM1 9h1v1h-1zM5 9h1v1h-1zM8 9h1v1h-1zM0 10h1v1h-1zM5 10h3v1h-3z"/><path id="g12_7801" d="M5 0h5v1h-5zM0 1h5v1h-5zM9 1h1v1h-1zM2 2h1v1h-1zM6 2h1v1h-1zM9 2h1v1h-1zM2 3h1v1h-1zM6 3h1v1h-1zM9 3h1v1h-1zM1 4h4v1h-4zM6 4h1v1h-1zM9 4h1v1h-1zM0 5h2v1h-2zM4 5h7v1h-7zM1 6h1v1h-1zM4 6h1v1h-1zM10 6h1v1h-1zM1 7h1v1h-1zM4 7h5v1h-5zM10 7h1v1h-1zM1 8h4v1h-4zM10 8h1v1h-1zM1 9h1v1h-1zM4 9h1v1h-1zM7 9h1v1h-1zM10 9h1v1h-1zM8 10h2v1h-2z"/><path id="g12_8ba2" d="M1 0h1v1h-1zM2 1h1v1h-1zM4 1h7v1h-7zM8 2h1v1h-1zM8 3h1v1h-1zM0 4h3v1h-3zM8 4h1v1h-1zM2 5h1v1h-1zM8 5h1v1h-1zM2 6h1v1h-1zM8 6h1v1h-1zM2 7h1v1h-1zM8 7h1v1h-1zM2 8h1v1h-1zM4 8h1v1h-1zM8 8h1v1h-1zM2 9h2v1h-2zM8 9h1v1h-1zM2 10h1v1h-1zM6 10h3v1h-3z"/><path id="g12_5907" d="M3 0h1v1h-1zM3 1h6v1h-6zM2 2h2v1h-2zM7 2h1v1h-1zM1 3h1v1h-1zM4 3h3v1h-3zM4 4h1v1h-1zM6 4h2v1h-2zM2 5h2v1h-2zM8 5h3v1h-3zM0 6h9v1h-9zM2 7h1v1h-1zM5 7h1v1h-1zM8 7h1v1h-1zM2 8h7v1h-7zM2 9h1v1h-1zM5 9h1v1h-1zM8 9h1v1h-1zM2 10h7v1h-7z"/><path id="g12_6ce8" d="M1 0h1v1h-1zM6 0h1v1h-1zM2 1h1v1h-1zM7 1h1v1h-1zM0 2h1v1h-1zM4 2h7v1h-7zM1 3h1v1h-1zM3 3h1v1h-1zM7 3h1v1h-1zM3 4h1v1h-1zM7 4h1v1h-1zM2 5h1v1h-1zM7 5h1v1h-1zM2 6h1v1h-1zM5 6h5v1h-5zM0 7h2v1h-2zM7 7h1v1h-1zM1 8h1v1h-1zM7 8h1v1h-1zM1 9h1v1h-1zM7 9h1v1h-1zM1 10h1v1h-1zM4 10h7v1h-7z"/><path id="g12_4e2a" d="M5 0h1v1h-1zM5 1h1v1h-1zM4 2h1v1h-1zM6 2h1v1h-1zM3 3h1v1h-1zM7 3h1v1h-1zM2 4h1v1h-1zM5 4h1v1h-1zM8 4h1v1h-1zM1 5h1v1h-1zM5 5h1v1h-1zM9 5h2v1h-2zM5 6h1v1h-1zM5 7h1v1h-1zM5 8h1v1h-1zM5 9h1v1h-1zM5 10h1v1h-1z"/><path id="g12_8ba1" d="M1 0h1v1h-1zM7 0h1v1h-1zM2 1h1v1h-1zM7 1h1v1h-1zM7 2h1v1h-1zM4 3h7v1h-7zM0 4h3v1h-3zM7 4h1v1h-1zM2 5h1v1h-1zM7 5h1v1h-1zM2 6h1v1h-1zM7 6h1v1h-1zM2 7h1v1h-1zM4 7h1v1h-1zM7 7h1v1h-1zM2 8h2v1h-2zM7 8h1v1h-1zM2 9h1v1h-1zM7 9h1v1h-1zM7 10h1v1h-1z"/><path id="g12_5dde" d="M3 0h1v1h-1zM10 0h1v1h-1zM3 1h1v1h-1zM6 1h1v1h-1zM10 1h1v1h-1zM3 2h1v1h-1zM6 2h1v1h-1zM10 2h1v1h-1zM1 3h1v1h-1zM3 3h2v1h-2zM6 3h2v1h-2zM10 3h1v1h-1zM1 4h1v1h-1zM3 4h1v1h-1zM5 4h2v1h-2zM8 4h1v1h-1zM10 4h1v1h-1zM0 5h1v1h-1zM3 5h1v1h-1zM6 5h1v1h-1zM8 5h1v1h-1zM10 5h1v1h-1zM3 6h1v1h-1zM6 6h1v1h-1zM10 6h1v1h-1zM3 7h1v1h-1zM6 7h1v1h-1zM10 7h1v1h-1zM3 8h1v1h-1zM6 8h1v1h-1zM10 8h1v1h-1zM2 9h1v1h-1zM6 9h1v1h-1zM10 9h1v1h-1zM1 10h1v1h-1zM10 10h1v1h-1z"/><path id="g12_4e50" d="M7 0h3v1h-3zM2 1h5v1h-5zM2 2h1v1h-1zM2 3h1v1h-1zM6 3h1v1h-1zM2 4h1v1h-1zM6 4h1v1h-1zM2 5h9v1h-9zM6 6h1v1h-1zM3 7h1v1h-1zM6 7h1v1h-1zM8 7h1v1h-1zM2 8h1v1h-1zM6 8h1v1h-1zM9 8h1v1h-1zM1 9h1v1h-1zM6 9h1v1h-1zM10 9h1v1h-1zM5 10h2v1h-2z"/><path id="g12_670d" d="M1 0h4v1h-4zM6 0h5v1h-5zM1 1h1v1h-1zM4 1h1v1h-1zM6 1h1v1h-1zM10 1h1v1h-1zM1 2h1v1h-1zM4 2h1v1h-1zM6 2h1v1h-1zM10 2h1v1h-1zM1 3h4v1h-4zM6 3h1v1h-1zM8 3h3v1h-3zM1 4h1v1h-1zM4 4h1v1h-1zM6 4h1v1h-1zM1 5h1v1h-1zM4 5h1v1h-1zM6 5h5v1h-5zM1 6h4v1h-4zM6 6h1v1h-1zM10 6h1v1h-1zM1 7h1v1h-1zM4 7h1v1h-1zM6 7h1v1h-1zM8 7h2v1h-2zM1 8h1v1h-1zM4 8h1v1h-1zM6 8h1v1h-1zM9 8h1v1h-1zM0 9h1v1h-1zM4 9h1v1h-1zM6 9h1v1h-1zM8 9h1v1h-1zM10 9h1v1h-1zM0 10h1v1h-1zM3 10h2v1h-2zM6 10h2v1h-2zM10 10h1v1h-1z"/><path id="g12_52a1" d="M3 0h1v1h-1zM3 1h6v1h-6zM2 2h2v1h-2zM7 2h1v1h-1zM1 3h1v1h-1zM4 3h1v1h-1zM6 3h1v1h-1zM5 4h1v1h-1zM3 5h2v1h-2zM6 5h2v1h-2zM0 6h3v1h-3zM5 6h1v1h-1zM8 6h3v1h-3zM2 7h7v1h-7zM4 8h1v1h-1zM8 8h1v1h-1zM3 9h1v1h-1zM8 9h1v1h-1zM1 10h2v1h-2zM6 10h2v1h-2z"/><path id="g12_5668" d="M1 0h4v1h-4zM6 0h4v1h-4zM1 1h1v1h-1zM4 1h1v1h-1zM6 1h1v1h-1zM9 1h1v1h-1zM1 2h1v1h-1zM4 2h1v1h-1zM6 2h1v1h-1zM9 2h1v1h-1zM1 3h4v1h-4zM6 3h4v1h-4zM5 4h1v1h-1zM8 4h1v1h-1zM0 5h11v1h-11zM3 6h1v1h-1zM7 6h1v1h-1zM0 7h5v1h-5zM6 7h5v1h-5zM1 8h1v1h-1zM4 8h1v1h-1zM6 8h1v1h-1zM9 8h1v1h-1zM1 9h1v1h-1zM4 9h1v1h-1zM6 9h1v1h-1zM9 9h1v1h-1zM1 10h4v1h-4zM6 10h4v1h-4z"/><path id="g12_64cd" d="M2 0h1v1h-1zM5 0h5v1h-5zM2 1h1v1h-1zM5 1h1v1h-1zM9 1h1v1h-1zM0 2h4v1h-4zM5 2h5v1h-5zM2 3h1v1h-1zM4 3h3v1h-3zM8 3h3v1h-3zM2 4h1v1h-1zM4 4h1v1h-1zM6 4h1v1h-1zM8 4h1v1h-1zM10 4h1v1h-1zM2 5h5v1h-5zM8 5h3v1h-3zM0 6h3v1h-3zM7 6h1v1h-1zM2 7h9v1h-9zM2 8h1v1h-1zM6 8h3v1h-3zM2 9h1v1h-1zM5 9h1v1h-1zM7 9h1v1h-1zM9 9h1v1h-1zM1 10h2v1h-2zM4 10h1v1h-1zM7 10h1v1h-1zM10 10h1v1h-1z"/><path id="g12_5458" d="M2 0h7v1h-7zM2 1h1v1h-1zM8 1h1v1h-1zM2 2h7v1h-7zM1 4h9v1h-9zM1 5h1v1h-1zM9 5h1v1h-1zM1 6h1v1h-1zM5 6h1v1h-1zM9 6h1v1h-1zM1 7h1v1h-1zM5 7h1v1h-1zM9 7h1v1h-1zM1 8h1v1h-1zM4 8h1v1h-1zM6 8h1v1h-1zM9 8h1v1h-1zM3 9h1v1h-1zM7 9h1v1h-1zM0 10h3v1h-3zM8 10h3v1h-3z"/><path id="g12_5f53" d="M5 0h1v1h-1zM1 1h1v1h-1zM5 1h1v1h-1zM9 1h1v1h-1zM2 2h1v1h-1zM5 2h1v1h-1zM8 2h1v1h-1zM3 3h1v1h-1zM5 3h1v1h-1zM7 3h1v1h-1zM1 4h9v1h-9zM9 5h1v1h-1zM9 6h1v1h-1zM2 7h8v1h-8zM9 8h1v1h-1zM9 9h1v1h-1zM1 10h9v1h-9z"/><path id="g12_524d" d="M3 0h1v1h-1zM8 0h1v1h-1zM4 1h1v1h-1zM7 1h1v1h-1zM1 2h10v1h-10zM2 4h4v1h-4zM7 4h1v1h-1zM9 4h1v1h-1zM2 5h1v1h-1zM5 5h1v1h-1zM7 5h1v1h-1zM9 5h1v1h-1zM2 6h4v1h-4zM7 6h1v1h-1zM9 6h1v1h-1zM2 7h1v1h-1zM5 7h1v1h-1zM7 7h1v1h-1zM9 7h1v1h-1zM2 8h4v1h-4zM7 8h1v1h-1zM9 8h1v1h-1zM2 9h1v1h-1zM5 9h1v1h-1zM9 9h1v1h-1zM2 10h1v1h-1zM4 10h2v1h-2zM7 10h3v1h-3z"/></defs></svg>
<div id="titlebar">
<svg style="position:absolute;left:2px;top:4px" width="16" height="16" viewBox="0 0 16 16"><rect x="0" y="0" width="16" height="16" fill="#c8d4d0"/><rect x=".5" y=".5" width="15" height="15" fill="none" stroke="#7a8a92"/><rect x="2" y="1" width="13" height="14" fill="#1fae98"/><rect x="3" y="2" width="3" height="7" fill="#3ff0ee"/><rect x="3" y="10" width="4" height="4" fill="#22b4a4"/><rect x="7" y="5" width="7" height="9" fill="#52eadc" stroke="#0f7a68"/><path d="M8 6l2.5 3 2.5-3v2l-2 2.5v3h-1v-3l-2-2.5z" fill="#d8fffa"/><path d="M9 0h7v7z" fill="#e8685a"/><path d="M9 0l7 7" stroke="#a02018" stroke-width="1.4" fill="none"/><path d="M12 0h4v4z" fill="#f4a89a"/></svg>
<svg class="ttl" width="230" height="16" viewBox="0 0 230 16" aria-hidden="true"><g fill="#0a246a"><use href="#g13_6613" x="23" y="1"/><use href="#g13_6613" x="24" y="1"/><use href="#g13_987a" x="37" y="1"/><use href="#g13_987a" x="38" y="1"/><use href="#g13_4f73" x="51" y="1"/><use href="#g13_4f73" x="52" y="1"/><use href="#g13_8f6f" x="65" y="1"/><use href="#g13_8f6f" x="66" y="1"/><use href="#g13_4ef6" x="79" y="1"/><use href="#g13_4ef6" x="80" y="1"/><use href="#g13_2d" x="103" y="1"/><use href="#g13_2d" x="104" y="1"/><use href="#g13_5b" x="118" y="1"/><use href="#g13_5b" x="119" y="1"/><use href="#g13_9500" x="125" y="1"/><use href="#g13_9500" x="126" y="1"/><use href="#g13_552e" x="139" y="1"/><use href="#g13_552e" x="140" y="1"/><use href="#g13_51fa" x="153" y="1"/><use href="#g13_51fa" x="154" y="1"/><use href="#g13_8d27" x="167" y="1"/><use href="#g13_8d27" x="168" y="1"/><use href="#g13_7ba1" x="181" y="1"/><use href="#g13_7ba1" x="182" y="1"/><use href="#g13_7406" x="195" y="1"/><use href="#g13_7406" x="196" y="1"/><use href="#g13_5d" x="208" y="1"/><use href="#g13_5d" x="209" y="1"/></g><g fill="#fff"><use href="#g13_6613" x="22"/><use href="#g13_6613" x="23"/><use href="#g13_987a" x="36"/><use href="#g13_987a" x="37"/><use href="#g13_4f73" x="50"/><use href="#g13_4f73" x="51"/><use href="#g13_8f6f" x="64"/><use href="#g13_8f6f" x="65"/><use href="#g13_4ef6" x="78"/><use href="#g13_4ef6" x="79"/><use href="#g13_2d" x="102"/><use href="#g13_2d" x="103"/><use href="#g13_5b" x="117"/><use href="#g13_5b" x="118"/><use href="#g13_9500" x="124"/><use href="#g13_9500" x="125"/><use href="#g13_552e" x="138"/><use href="#g13_552e" x="139"/><use href="#g13_51fa" x="152"/><use href="#g13_51fa" x="153"/><use href="#g13_8d27" x="166"/><use href="#g13_8d27" x="167"/><use href="#g13_7ba1" x="180"/><use href="#g13_7ba1" x="181"/><use href="#g13_7406" x="194"/><use href="#g13_7406" x="195"/><use href="#g13_5d" x="207"/><use href="#g13_5d" x="208"/></g></svg><span class="t ttlt">易顺佳软件 - [销售出货管理]</span>
<div class="wb min" style="left:955px"><i></i></div>
<div class="wb rst" style="left:978px"><i></i><b></b></div>
<div class="wb cls" style="left:1001px"><svg width="21" height="21" viewBox="0 0 21 21"><path d="M6 6l9 9M15 6l-9 9" stroke="#fff" stroke-width="2.2" stroke-linecap="square"/></svg></div>
</div>
<div id="menubar">
<div class="mi" style="left:6px"><span class="c" style="width:48px"><svg width="48" height="12" viewBox="0 0 48 12" aria-hidden="true"><use href="#g12_57fa" x="0"/><use href="#g12_7840" x="12"/><use href="#g12_4fe1" x="24"/><use href="#g12_606f" x="36"/></svg><span class="t">基础信息</span></span><span class="m">(<u>S</u>)</span></div>
<div class="mi" style="left:84px"><span class="c" style="width:48px"><svg width="48" height="12" viewBox="0 0 48 12" aria-hidden="true"><use href="#g12_91c7" x="0"/><use href="#g12_8d2d" x="12"/><use href="#g12_7ba1" x="24"/><use href="#g12_7406" x="36"/></svg><span class="t">采购管理</span></span><span class="m">(<u>T</u>)</span></div>
<div class="mi" style="left:162px"><span class="c" style="width:48px"><svg width="48" height="12" viewBox="0 0 48 12" aria-hidden="true"><use href="#g12_9500" x="0"/><use href="#g12_552e" x="12"/><use href="#g12_7ba1" x="24"/><use href="#g12_7406" x="36"/></svg><span class="t">销售管理</span></span><span class="m">(<u>U</u>)</span></div>
<div class="mi" style="left:240px"><span class="c" style="width:48px"><svg width="48" height="12" viewBox="0 0 48 12" aria-hidden="true"><use href="#g12_5e93" x="0"/><use href="#g12_5b58" x="12"/><use href="#g12_7ba1" x="24"/><use href="#g12_7406" x="36"/></svg><span class="t">库存管理</span></span><span class="m">(<u>V</u>)</span></div>
<div class="mi" style="left:318px"><span class="c" style="width:48px"><svg width="48" height="12" viewBox="0 0 48 12" aria-hidden="true"><use href="#g12_5e94" x="0"/><use href="#g12_6536" x="12"/><use href="#g12_5e94" x="24"/><use href="#g12_4ed8" x="36"/></svg><span class="t">应收应付</span></span><span class="m">(<u>W</u>)</span></div>
<div class="mi" style="left:396px"><span class="c" style="width:48px"><svg width="48" height="12" viewBox="0 0 48 12" aria-hidden="true"><use href="#g12_7cfb" x="0"/><use href="#g12_7edf" x="12"/><use href="#g12_8bbe" x="24"/><use href="#g12_7f6e" x="36"/></svg><span class="t">系统设置</span></span><span class="m">(<u>X</u>)</span></div>
<div class="mi" style="left:474px"><span class="c" style="width:48px"><svg width="48" height="12" viewBox="0 0 48 12" aria-hidden="true"><use href="#g12_8f85" x="0"/><use href="#g12_52a9" x="12"/><use href="#g12_8bbe" x="24"/><use href="#g12_7f6e" x="36"/></svg><span class="t">辅助设置</span></span><span class="m">(<u>Y</u>)</span></div>
<div class="mi" style="left:552px"><span class="c" style="width:48px"><svg width="48" height="12" viewBox="0 0 48 12" aria-hidden="true"><use href="#g12_5df2" x="0"/><use href="#g12_5f00" x="12"/><use href="#g12_7a97" x="24"/><use href="#g12_4f53" x="36"/></svg><span class="t">已开窗体</span></span><span class="m">(<u>Z</u>)</span></div>
</div>
<div id="toolbar">
<div class="tb" style="left:-1px"><svg style="left:9px;top:6px;shape-rendering:auto" width="32" height="22" viewBox="0 0 32 22"><path d="M2 9.3L4.2 8l1.6 1.2 1 .2 3 2.6L23.6 1.1l4.2 1v3.9h2.1v4.4L19.2 17.6 15 20H8.2L3 15.4z" fill="#062a06"/><path d="M3.4 10l1-.6 5.6 4.3L24 2.6l2.6.6v2.2L10.2 16.8 3.6 12z" fill="#27a832"/><path d="M3.8 12.9l6.4 4.9L27.4 6.3l1.3 1v2.4L18.6 16.6l-3.9 2.2H8.8L4.2 14.9z" fill="#178c24"/><path d="M4 11.2l6.1 4.4L26.4 4.2" stroke="#0a5a12" stroke-width="1" fill="none"/><path d="M10.4 18.6h4l3.8-2.4" stroke="#0b5a3a" stroke-width="1.2" fill="none"/></svg><div class="tl" style="left:10px"><span class="c" style="width:24px"><svg width="24" height="12" viewBox="0 0 24 12" aria-hidden="true"><use href="#g12_5168" x="0"/><use href="#g12_90e8" x="12"/></svg><span class="t">全部</span></span><span class="l k"><u>A</u></span></div></div>
<div class="tb" style="left:49px"><svg style="left:14px;top:7px;shape-rendering:auto" width="24" height="20" viewBox="0 0 24 20"><path d="M1.5 7.5h2v10.5h-2z" fill="#ffffd0" stroke="#000"/><path d="M3.5 2.5h8.5l6 8v2H3.5z" fill="#f6f2f6" stroke="#000"/><path d="M6 5h3M6 7.5h4M6 10h3" stroke="#b8aac0" stroke-width=".8"/><path d="M11 3l7 8.5H9z" fill="#fff" opacity=".7"/><path d="M5.5 12.5h14.800v1.8L15.500 18.500H1.5z" fill="#9c9c20" stroke="#000" stroke-linejoin="round"/><path d="M3.500 12.500v5" stroke="#000"/><path d="M13.500 1.500h2v-1h3.200v1h1.800v1.200h1v3.200h-1v1.600h-2v2h-3.400v-2h-1.800v-1.600h-1.800v-3.200h2z" fill="#18ee30" stroke="#000" stroke-width="1" stroke-linejoin="round"/><path d="M17.500 9.500v3" stroke="#000" stroke-width="1.400"/></svg><div class="tl" style="left:9px"><span class="c" style="width:24px"><svg width="24" height="12" viewBox="0 0 24 12" aria-hidden="true"><use href="#g12_6dfb" x="0"/><use href="#g12_52a0" x="12"/></svg><span class="t">添加</span></span><span class="l k"><u>N</u></span></div></div>
<div class="tb" style="left:99px"><svg style="left:17px;top:9px;shape-rendering:auto" width="17" height="17" viewBox="0 0 17 17"><rect x="1" y="1" width="14.500" height="14.800" fill="#f3eeef" stroke="#000" stroke-width="2"/><path d="M3 4h5M3 7h4M3 10h3" stroke="#a8a0a8" stroke-width=".9"/><path d="M3 13h10" stroke="#c8c0d0" stroke-width=".9"/><path d="M8.300 11.200l.6-3.200 5-5.200 1.600.2.200 2.200-5.200 5z" fill="#000"/><path d="M9.800 8.300l4.400-4.500 1 .9-4.400 4.500z" fill="#3aa2e0"/><path d="M9 10.400l.5-1.700 1.200 1.100z" fill="#fff"/></svg><div class="tl" style="left:10px"><span class="c" style="width:24px"><svg width="24" height="12" viewBox="0 0 24 12" aria-hidden="true"><use href="#g12_4fee" x="0"/><use href="#g12_6539" x="12"/></svg><span class="t">修改</span></span><span class="l k"><u>E</u></span></div></div>
<div class="tb" style="left:149px"><svg style="left:16px;top:10px;shape-rendering:auto" width="18" height="17" viewBox="0 0 18 17"><path d="M1.300 1.600L16.700 15.400M16.700 1.600L1.300 15.400" stroke="#6c0a14" stroke-width="1.900" stroke-linecap="round"/></svg><div class="tl" style="left:9px"><span class="c" style="width:24px"><svg width="24" height="12" viewBox="0 0 24 12" aria-hidden="true"><use href="#g12_5220" x="0"/><use href="#g12_9664" x="12"/></svg><span class="t">删除</span></span><span class="l k"><u>D</u></span></div></div>
<div class="tb" style="left:199px"><svg style="left:17px;top:11px" width="17" height="15" viewBox="0 0 17 15"><path d="M3 0h4v2h1v2h1v-2h1v-2h4v2h1v2h1v2h1v9h-6v-4h-1v-1h-3v1h-1v4h-6v-9h1v-2h1v-2h1z" fill="#000"/><path d="M5 1h1v1h-1zM11 1h1v1h-1zM3 5h2v1h-2zM10 5h1v1h-1zM2 7h1v3h-1zM7 7h1v2h-1zM10 7h1v3h-1zM1 11h1v3h-1zM12 11h2v3h-2z" fill="#fff"/></svg><div class="tl" style="left:10px"><span class="c" style="width:24px"><svg width="24" height="12" viewBox="0 0 24 12" aria-hidden="true"><use href="#g12_67e5" x="0"/><use href="#g12_8be2" x="12"/></svg><span class="t">查询</span></span><span class="l k"><u>F</u></span></div></div>
<div class="tb" style="left:249px"><svg style="left:13px;top:6px;shape-rendering:auto" width="24" height="22" viewBox="0 0 24 22"><path d="M2.200 5.500l4 2.800 5.400-6.200" stroke="#000" stroke-width="1.400" fill="none"/><path d="M8.500 6.500l3.500-1 4.500 5.500-.5 8.500h-9v-9z" fill="#fff"/><path d="M10.600 7h1.600M8 10.400h7M8 15.400h6" stroke="#c02424" stroke-width="1.100"/><path d="M8 12.900h7.500M7.500 17.600h7" stroke="#000" stroke-width="1.100"/><path d="M7.500 11v7M7 19.500h5.500" stroke="#000" stroke-width="1.100"/><path d="M12.500 2.500l2-.3 7.500 7.300v2.200l-1.600 1.200-2.400-2.100-.8 1.500-2.500-2.500-.400-3z" fill="#000"/><path d="M14.300 4.500l1.300 1.100-.4.900-1.200-.8z" fill="#fff"/><path d="M19.200 9l1.800 1.400-.8 1.200-1.800-1.300z" fill="#701010"/><path d="M15.600 11.600l2.200.5-1.500 7-1.700.6z" fill="#000"/><path d="M15.500 12.300l1.600.4-1.300 5-1.200-.6z" fill="#ece42a"/></svg><div class="tl" style="left:8px"><span class="c" style="width:24px"><svg width="24" height="12" viewBox="0 0 24 12" aria-hidden="true"><use href="#g12_5ba1" x="0"/><use href="#g12_6838" x="12"/></svg><span class="t">审核</span></span><span class="l k"><u>W</u></span></div></div>
<div class="tb" style="left:299px"><svg style="left:13px;top:6px;shape-rendering:auto" width="24" height="22" viewBox="0 0 24 22"><path d="M8.500 9.500l8-1 .5 2.500-.5 8.500h-9v-9z" fill="#fff"/><path d="M8 10.400h7M8 15.400h6" stroke="#c02424" stroke-width="1.100"/><path d="M8 12.900h7.500M7.500 17.600h7" stroke="#000" stroke-width="1.100"/><path d="M7.500 9v9M7 19.500h5.500" stroke="#000" stroke-width="1.100"/><path d="M9.500 2.800l3.300-.8 1.800.9 7.400 6.600v2.200l-1.600 1.200-2.400-2.100-.8 1.500-2.500-2.500-.4-3-3-1.500z" fill="#000"/><path d="M10.400 4.300l1.300-.6 3 3.600-.9.700z" fill="#fff"/><path d="M15.600 6.500l1.300 1.100-.4.900-1.200-.8z" fill="#fff"/><path d="M19.200 9l1.800 1.400-.8 1.200-1.800-1.300z" fill="#701010"/><path d="M15.600 11.600l2.200.5-1.500 7-1.700.6z" fill="#000"/><path d="M15.500 12.300l1.600.4-1.300 5-1.200-.6z" fill="#ece42a"/><path d="M2.400 2.200L11.200 9.300M9 2.300L1.200 10.500" stroke="#000" stroke-width="1.500" fill="none"/></svg><div class="tl" style="left:10px"><span class="c" style="width:24px"><svg width="24" height="12" viewBox="0 0 24 12" aria-hidden="true"><use href="#g12_53cd" x="0"/><use href="#g12_5ba1" x="12"/></svg><span class="t">反审</span></span><span class="l k"><u>X</u></span></div></div>
<div class="tb" style="left:349px"><svg style="left:16px;top:7px;shape-rendering:auto" width="18" height="20" viewBox="0 0 18 20"><ellipse cx="9" cy="10" rx="7.600" ry="8.600" fill="#e81414" stroke="#5c0606" stroke-width="1.300"/><path d="M4.600 5.400l8.800 9.200M13.400 5.400l-8.800 9.200" stroke="#fff" stroke-width="2.200"/><path d="M5 5.800l8 8.400M13 5.800l-8 8.400" stroke="#301010" stroke-width=".6"/><circle cx="9" cy="10" r="1.100" fill="#000"/></svg><div class="tl" style="left:9px"><span class="c" style="width:24px"><svg width="24" height="12" viewBox="0 0 24 12" aria-hidden="true"><use href="#g12_4f5c" x="0"/><use href="#g12_5e9f" x="12"/></svg><span class="t">作废</span></span><span class="l k"><u>R</u></span></div></div>
<div class="tb" style="left:399px"><svg style="left:14px;top:6px;shape-rendering:auto" width="24" height="22" viewBox="0 0 24 22"><path d="M1.700 1.700h10.300l3 3.500v12.200h-13.300z" fill="#fcfcfe" stroke="#000" stroke-width="1.400"/><path d="M12 1.700v3.600h3" fill="#fff" stroke="#000" stroke-width="1.200"/><circle cx="13.600" cy="11.400" r="3.900" fill="#a6e6ea" stroke="#000" stroke-width="1.500"/><path d="M12 10.400a2 2 0 0 1 2-1.400" stroke="#fff" stroke-width="1.100" fill="none"/><path d="M16.500 14.600l4.300 5" stroke="#000" stroke-width="2.400" stroke-linecap="round"/></svg><div class="tl" style="left:10px"><span class="c" style="width:24px"><svg width="24" height="12" viewBox="0 0 24 12" aria-hidden="true"><use href="#g12_6253" x="0"/><use href="#g12_5370" x="12"/></svg><span class="t">打印</span></span><span class="l k"><u>P</u></span></div></div>
<div class="tb" style="left:449px"><svg style="left:17px;top:10px;shape-rendering:auto" width="18" height="16" viewBox="0 0 18 16"><path d="M.800 .800h15.900v13l-1 .900h-13.900l-1-.900z" fill="#98a232" stroke="#000" stroke-width="1.400" stroke-linejoin="round"/><rect x="4" y="1.600" width="9.400" height="6.200" fill="#f0f6f4" stroke="#000" stroke-width="1.200"/><rect x="14.300" y="1.800" width="1.200" height="1.200" fill="#fff"/><rect x="4" y="10.600" width="10" height="4" fill="#000"/><rect x="11" y="11.500" width="2" height="3" fill="#fff"/></svg><div class="tl" style="left:9px"><span class="c" style="width:24px"><svg width="24" height="12" viewBox="0 0 24 12" aria-hidden="true"><use href="#g12_5bfc" x="0"/><use href="#g12_51fa" x="12"/></svg><span class="t">导出</span></span><span class="l k"><u>C</u></span></div></div>
<div class="tb" style="left:504px"><svg style="left:14px;top:7px;shape-rendering:auto" width="24" height="20" viewBox="0 0 24 20"><rect x="1.700" y="1.700" width="12" height="13.600" fill="#000" stroke="#000" stroke-width="1.400"/><rect x="2.500" y="2.600" width="2" height="11" fill="#f4f0f4"/><rect x="6.200" y="3" width="1.200" height="5" fill="#fff" opacity=".5"/><rect x="10.400" y="2.400" width="1" height="1.600" fill="#fff"/><g transform="translate(11.500 12.200)"><path d="M-1.36 -4.39L-1.39 -6.86L1.39 -6.86L1.36 -4.39L2.15 -4.07L3.87 -5.83L5.83 -3.87L4.07 -2.15L4.39 -1.36L6.86 -1.39L6.86 1.39L4.39 1.36L4.07 2.15L5.83 3.87L3.87 5.83L2.15 4.07L1.36 4.39L1.39 6.86L-1.39 6.86L-1.36 4.39L-2.15 4.07L-3.87 5.83L-5.83 3.87L-4.07 2.15L-4.39 1.36L-6.86 1.39L-6.86 -1.39L-4.39 -1.36L-4.07 -2.15L-5.83 -3.87L-3.87 -5.83L-2.15 -4.07z" fill="#d2d45a" stroke="#000" stroke-width="1.500" stroke-linejoin="round"/><path d="M-1.36 -4.39L-1.39 -6.86L1.39 -6.86L1.36 -4.39L2.15 -4.07L3.87 -5.83L5.83 -3.87L4.07 -2.15L4.39 -1.36L6.86 -1.39L6.86 1.39L4.39 1.36L4.07 2.15L5.83 3.87L3.87 5.83L2.15 4.07L1.36 4.39L1.39 6.86L-1.39 6.86L-1.36 4.39L-2.15 4.07L-3.87 5.83L-5.83 3.87L-4.07 2.15L-4.39 1.36L-6.86 1.39L-6.86 -1.39L-4.39 -1.36L-4.07 -2.15L-5.83 -3.87L-3.87 -5.83L-2.15 -4.07z" fill="#d2d45a"/><circle r="2.700" fill="#000"/><path d="M-4 -1.200l1.400-2.200 2.200-.8" stroke="#f2f4a4" stroke-width="1" fill="none"/></g><rect x="9.600" y="4.400" width="2.400" height="7.600" fill="#f8f8f8" stroke="#000" stroke-width=".9"/></svg><div class="tl" style="left:4px"><span class="c" style="width:36px"><svg width="36" height="12" viewBox="0 0 36 12" aria-hidden="true"><use href="#g12_7f51" x="0"/><use href="#g12_683c" x="12"/><use href="#g12_5217" x="24"/></svg><span class="t">网格列</span></span><span class="l k"><u>T</u></span></div></div>
<div class="tb" style="left:563px"><svg style="left:12px;top:4px;shape-rendering:auto" width="26" height="24" viewBox="0 0 26 24"><path d="M2.500 12.800v3.200l11.900 6.300 9-13.700-2.400-1.600z" fill="#efe9dd" stroke="#000" stroke-width=".9" stroke-linejoin="round"/><path d="M12.100 18.300l7.900-7.800 3.200-1.900-8.800 13.700z" fill="#dedede" stroke="#000" stroke-width=".9" stroke-linejoin="round"/><path d="M2.500 12.600l6.900-7 10.600 4.900-7.900 7.800z" fill="#fbfbfb" stroke="#000" stroke-width=".9" stroke-linejoin="round"/><path d="M9.500 1.700l14 6.300-2.800 2.900-11.200-5.400z" fill="#d6d8d6" stroke="#000" stroke-width=".9" stroke-linejoin="round"/><path d="M10.100 2.800l4.600 2-1.300 1.900-3.300-1.500z" fill="#8ccaa8"/><path d="M13.300 8.700l-4.400 5" stroke="#ea1418" stroke-width="2"/><path d="M11.200 9.400l2.300-.9M7.600 13.100l2.800 1.400" stroke="#ea1418" stroke-width="1.400"/></svg><div class="tl" style="left:9px"><span class="c" style="width:24px"><svg width="24" height="12" viewBox="0 0 24 12" aria-hidden="true"><use href="#g12_8bbe" x="0"/><use href="#g12_7f6e" x="12"/></svg><span class="t">设置</span></span><span class="l k"><u>H</u></span></div></div>
<div class="tb" style="left:618px"><svg style="left:16px;top:7px;shape-rendering:auto" width="20" height="19" viewBox="0 0 20 19"><rect x="7.900" y="1.600" width="10.500" height="15.400" fill="#5cc8b4" stroke="#000" stroke-width="1.500"/><rect x="9" y="2.500" width="2" height="13" fill="#86eedc"/><rect x="13.400" y="3.500" width="2" height="12" fill="#e6e2f2"/><rect x="15.400" y="3" width="1.800" height="13" fill="#4ab8a4"/><rect x="11.400" y="4.500" width="1.700" height="13" fill="#000"/><rect x="13.600" y="9.400" width="3" height="1.400" fill="#000"/><path d="M11 16.500h2.500M15.500 16.500h3" stroke="#000" stroke-width="1.800"/><path d="M2 16.400h8l1-2.400" stroke="#000" stroke-width="1.700" fill="none"/><path d="M1.700 8.600h4v-2.600l5 4.400-5 4.400v-2.600h-4z" fill="#cc1420" stroke="#3a0808" stroke-width="1" stroke-linejoin="round"/></svg><div class="tl" style="left:9px"><span class="c" style="width:24px"><svg width="24" height="12" viewBox="0 0 24 12" aria-hidden="true"><use href="#g12_9000" x="0"/><use href="#g12_51fa" x="12"/></svg><span class="t">退出</span></span><span class="l k"><u>Q</u></span></div></div>
</div>
<div class="grid" id="g1" style="top:91px;height:412px">
<div class="hr" style="top:1px">
<div class="hc ind" style="left:1px;width:11px"></div>
<div class="hc" style="left:13px;width:88px"><span class="c" style="width:48px"><svg width="48" height="12" viewBox="0 0 48 12" aria-hidden="true"><use href="#g12_5355" x="0"/><use href="#g12_636e" x="12"/><use href="#g12_7f16" x="24"/><use href="#g12_53f7" x="36"/></svg><span class="t">单据编号</span></span></div>
<div class="hc" style="left:102px;width:70px"><span class="c" style="width:48px"><svg width="48" height="12" viewBox="0 0 48 12" aria-hidden="true"><use href="#g12_51fa" x="0"/><use href="#g12_8d27" x="12"/><use href="#g12_65e5" x="24"/><use href="#g12_671f" x="36"/></svg><span class="t">出货日期</span></span></div>
<div class="hc" style="left:173px;width:80px"><span class="c" style="width:48px"><svg width="48" height="12" viewBox="0 0 48 12" aria-hidden="true"><use href="#g12_51fa" x="0"/><use href="#g12_5e93" x="12"/><use href="#g12_4ed3" x="24"/><use href="#g12_5e93" x="36"/></svg><span class="t">出库仓库</span></span></div>
<div class="hc" style="left:254px;width:85px"><span class="c" style="width:48px"><svg width="48" height="12" viewBox="0 0 48 12" aria-hidden="true"><use href="#g12_5ba2" x="0"/><use href="#g12_6237" x="12"/><use href="#g12_7f16" x="24"/><use href="#g12_53f7" x="36"/></svg><span class="t">客户编号</span></span></div>
<div class="hc" style="left:340px;width:120px"><span class="c" style="width:48px"><svg width="48" height="12" viewBox="0 0 48 12" aria-hidden="true"><use href="#g12_5ba2" x="0"/><use href="#g12_6237" x="12"/><use href="#g12_540d" x="24"/><use href="#g12_79f0" x="36"/></svg><span class="t">客户名称</span></span></div>
<div class="hc" style="left:461px;width:70px"><span class="c" style="width:24px"><svg width="24" height="12" viewBox="0 0 24 12" aria-hidden="true"><use href="#g12_603b" x="0"/><use href="#g12_989d" x="12"/></svg><span class="t">总额</span></span></div>
<div class="hc" style="left:532px;width:50px"><span class="c" style="width:24px"><svg width="24" height="12" viewBox="0 0 24 12" aria-hidden="true"><use href="#g12_7a0e" x="0"/><use href="#g12_7387" x="12"/></svg><span class="t">税率</span></span><span class="l" style="margin-right:-1.87px">(%)</span></div>
<div class="hc" style="left:583px;width:60px"><span class="c" style="width:48px"><svg width="48" height="12" viewBox="0 0 48 12" aria-hidden="true"><use href="#g12_7ed3" x="0"/><use href="#g12_5e10" x="12"/><use href="#g12_65b9" x="24"/><use href="#g12_5f0f" x="36"/></svg><span class="t">结帐方式</span></span></div>
<div class="hc" style="left:644px;width:70px"><span class="c" style="width:48px"><svg width="48" height="12" viewBox="0 0 48 12" aria-hidden="true"><use href="#g12_6536" x="0"/><use href="#g12_6b3e" x="12"/><use href="#g12_671f" x="24"/><use href="#g12_9650" x="36"/></svg><span class="t">收款期限</span></span></div>
<div class="hc" style="left:715px;width:88px"><span class="c" style="width:48px"><svg width="48" height="12" viewBox="0 0 48 12" aria-hidden="true"><use href="#g12_5ba2" x="0"/><use href="#g12_6237" x="12"/><use href="#g12_5355" x="24"/><use href="#g12_53f7" x="36"/></svg><span class="t">客户单号</span></span></div>
<div class="hc" style="left:804px;width:120px"><span class="c" style="width:24px"><svg width="24" height="12" viewBox="0 0 24 12" aria-hidden="true"><use href="#g12_5730" x="0"/><use href="#g12_5740" x="12"/></svg><span class="t">地址</span></span></div>
<div class="hc" style="left:925px;width:81px"><span class="c" style="width:24px"><svg width="24" height="12" viewBox="0 0 24 12" aria-hidden="true"><use href="#g12_7535" x="0"/><use href="#g12_8bdd" x="12"/></svg><span class="t">电话</span></span></div>
</div>
<div class="row" style="top:17px;color:#000;width:1006px">
<div class="ic" style="width:11px"></div>
<div class="dc L" style="left:13px;width:88px"><span class="l" style="margin-right:-8.34px">XC0912250003</span></div>
<div class="dc L" style="left:102px;width:70px"><span class="l" style="margin-right:-6.14px">2009-12-25</span></div>
<div class="dc L" style="left:173px;width:80px"><span class="c" style="width:48px"><svg width="48" height="12" viewBox="0 0 48 12" aria-hidden="true"><use href="#g12_673a" x="0"/><use href="#g12_68b0" x="12"/><use href="#g12_4ed3" x="24"/><use href="#g12_5e93" x="36"/></svg><span class="t">机械仓库</span></span></div>
<div class="dc L" style="left:254px;width:85px"><span class="l" style="margin-right:-6.00px">DW000001</span></div>
<div class="dc L" style="left:340px;width:120px"><span class="c" style="width:72px"><svg width="72" height="12" viewBox="0 0 72 12" aria-hidden="true"><use href="#g12_4e07" x="0"/><use href="#g12_535a" x="12"/><use href="#g12_57f9" x="24"/><use href="#g12_8bad" x="36"/><use href="#g12_516c" x="48"/><use href="#g12_53f8" x="60"/></svg><span class="t">万博培训公司</span></span></div>
<div class="dc R" style="left:461px;width:70px"><span class="l" style="margin-right:-3.34px">20930</span></div>
<div class="dc R" style="left:532px;width:50px"><span class="l" style="margin-right:-1.33px">17</span></div>
<div class="dc L" style="left:583px;width:60px"><span class="l" style="margin-right:-1.33px">30</span><span class="c" style="width:36px"><svg width="36" height="12" viewBox="0 0 36 12" aria-hidden="true"><use href="#g12_5929" x="0"/><use href="#g12_7ed3" x="12"/><use href="#g12_5e10" x="24"/></svg><span class="t">天结帐</span></span></div>
<div class="dc L" style="left:644px;width:70px"><span class="l" style="margin-right:-6.14px">2010-01-25</span></div>
<div class="dc L" style="left:715px;width:88px"></div>
<div class="dc L" style="left:804px;width:120px"><span class="c" style="width:72px"><svg width="72" height="12" viewBox="0 0 72 12" aria-hidden="true"><use href="#g12_5e7f" x="0"/><use href="#g12_4e1c" x="12"/><use href="#g12_7701" x="24"/><use href="#g12_6df1" x="36"/><use href="#g12_5733" x="48"/><use href="#g12_5e02" x="60"/></svg><span class="t">广东省深圳市</span></span></div>
<div class="dc L" style="left:925px;width:81px"><span class="l" style="margin-right:-8.41px">0755-81457845</span></div>
</div>
<div class="row" style="top:33px;color:#000080;width:1006px">
<div class="ic" style="width:11px"></div>
<div class="dc L" style="left:13px;width:88px"><span class="l" style="margin-right:-8.34px">XC0912230002</span></div>
<div class="dc L" style="left:102px;width:70px"><span class="l" style="margin-right:-6.14px">2009-12-23</span></div>
<div class="dc L" style="left:173px;width:80px"><span class="c" style="width:48px"><svg width="48" height="12" viewBox="0 0 48 12" aria-hidden="true"><use href="#g12_673a" x="0"/><use href="#g12_68b0" x="12"/><use href="#g12_4ed3" x="24"/><use href="#g12_5e93" x="36"/></svg><span class="t">机械仓库</span></span></div>
<div class="dc L" style="left:254px;width:85px"><span class="l" style="margin-right:-6.00px">DW000002</span></div>
<div class="dc L" style="left:340px;width:120px"><span class="c" style="width:96px"><svg width="96" height="12" viewBox="0 0 96 12" aria-hidden="true"><use href="#g12_516c" x="0"/><use href="#g12_65b0" x="12"/><use href="#g12_79d1" x="24"/><use href="#g12_6280" x="36"/><use href="#g12_6709" x="48"/><use href="#g12_9650" x="60"/><use href="#g12_516c" x="72"/><use href="#g12_53f8" x="84"/></svg><span class="t">公新科技有限公司</span></span></div>
<div class="dc R" style="left:461px;width:70px"><span class="l" style="margin-right:-2.67px">4900</span></div>
<div class="dc R" style="left:532px;width:50px"><span class="l" style="margin-right:-0.67px">6</span></div>
<div class="dc L" style="left:583px;width:60px"><span class="l" style="margin-right:-1.33px">90</span><span class="c" style="width:36px"><svg width="36" height="12" viewBox="0 0 36 12" aria-hidden="true"><use href="#g12_5929" x="0"/><use href="#g12_7ed3" x="12"/><use href="#g12_5e10" x="24"/></svg><span class="t">天结帐</span></span></div>
<div class="dc L" style="left:644px;width:70px"><span class="l" style="margin-right:-6.14px">2010-03-23</span></div>
<div class="dc L" style="left:715px;width:88px"></div>
<div class="dc L" style="left:804px;width:120px"><span class="c" style="width:72px"><svg width="72" height="12" viewBox="0 0 72 12" aria-hidden="true"><use href="#g12_5e7f" x="0"/><use href="#g12_4e1c" x="12"/><use href="#g12_7701" x="24"/><use href="#g12_6df1" x="36"/><use href="#g12_5733" x="48"/><use href="#g12_5e02" x="60"/></svg><span class="t">广东省深圳市</span></span></div>
<div class="dc L" style="left:925px;width:81px"><span class="l" style="margin-right:-8.41px">0755-88841456</span></div>
</div>
<div class="row sel" style="top:49px;color:#fff;width:1006px">
<div class="ic" style="width:11px"><s></s></div>
<div class="dc L" style="left:13px;width:88px"><span class="l" style="margin-right:-8.34px">XC0912160001</span></div>
<div class="dc L" style="left:102px;width:70px"><span class="l" style="margin-right:-6.14px">2009-12-18</span></div>
<div class="dc L" style="left:173px;width:80px"><span class="c" style="width:48px"><svg width="48" height="12" viewBox="0 0 48 12" aria-hidden="true"><use href="#g12_673a" x="0"/><use href="#g12_68b0" x="12"/><use href="#g12_4ed3" x="24"/><use href="#g12_5e93" x="36"/></svg><span class="t">机械仓库</span></span></div>
<div class="dc L foc" style="left:254px;width:85px"><span class="l" style="margin-right:-6.00px">DW000001</span></div>
<div class="dc L" style="left:340px;width:120px"><span class="c" style="width:72px"><svg width="72" height="12" viewBox="0 0 72 12" aria-hidden="true"><use href="#g12_4e07" x="0"/><use href="#g12_535a" x="12"/><use href="#g12_57f9" x="24"/><use href="#g12_8bad" x="36"/><use href="#g12_516c" x="48"/><use href="#g12_53f8" x="60"/></svg><span class="t">万博培训公司</span></span></div>
<div class="dc R" style="left:461px;width:70px"><span class="l" style="margin-right:-2.67px">1720</span></div>
<div class="dc R" style="left:532px;width:50px"><span class="l" style="margin-right:-1.33px">17</span></div>
<div class="dc L" style="left:583px;width:60px"><span class="l" style="margin-right:-1.33px">30</span><span class="c" style="width:36px"><svg width="36" height="12" viewBox="0 0 36 12" aria-hidden="true"><use href="#g12_5929" x="0"/><use href="#g12_7ed3" x="12"/><use href="#g12_5e10" x="24"/></svg><span class="t">天结帐</span></span></div>
<div class="dc L" style="left:644px;width:70px"><span class="l" style="margin-right:-6.14px">2010-01-18</span></div>
<div class="dc L" style="left:715px;width:88px"></div>
<div class="dc L" style="left:804px;width:120px"><span class="c" style="width:72px"><svg width="72" height="12" viewBox="0 0 72 12" aria-hidden="true"><use href="#g12_5e7f" x="0"/><use href="#g12_4e1c" x="12"/><use href="#g12_7701" x="24"/><use href="#g12_6df1" x="36"/><use href="#g12_5733" x="48"/><use href="#g12_5e02" x="60"/></svg><span class="t">广东省深圳市</span></span></div>
<div class="dc L" style="left:925px;width:81px"><span class="l" style="margin-right:-8.41px">0755-81457845</span></div>
</div>
<div class="row" style="top:65px;color:#000080;width:1006px">
<div class="ic" style="width:11px"></div>
<div class="dc L" style="left:13px;width:88px"><span class="l" style="margin-right:-8.34px">XC0911200003</span></div>
<div class="dc L" style="left:102px;width:70px"><span class="l" style="margin-right:-6.14px">2009-11-20</span></div>
<div class="dc L" style="left:173px;width:80px"><span class="c" style="width:48px"><svg width="48" height="12" viewBox="0 0 48 12" aria-hidden="true"><use href="#g12_786c" x="0"/><use href="#g12_4ef6" x="12"/><use href="#g12_4ed3" x="24"/><use href="#g12_5e93" x="36"/></svg><span class="t">硬件仓库</span></span></div>
<div class="dc L" style="left:254px;width:85px"><span class="l" style="margin-right:-6.00px">DW000003</span></div>
<div class="dc L" style="left:340px;width:120px"><span class="c" style="width:48px"><svg width="48" height="12" viewBox="0 0 48 12" aria-hidden="true"><use href="#g12_5174" x="0"/><use href="#g12_534e" x="12"/><use href="#g12_7535" x="24"/><use href="#g12_5b50" x="36"/></svg><span class="t">兴华电子</span></span></div>
<div class="dc R" style="left:461px;width:70px"><span class="l" style="margin-right:-3.34px">36330</span></div>
<div class="dc R" style="left:532px;width:50px"></div>
<div class="dc L" style="left:583px;width:60px"><span class="c" style="width:48px"><svg width="48" height="12" viewBox="0 0 48 12" aria-hidden="true"><use href="#g12_73b0" x="0"/><use href="#g12_91d1" x="12"/><use href="#g12_7ed3" x="24"/><use href="#g12_5e10" x="36"/></svg><span class="t">现金结帐</span></span></div>
<div class="dc L" style="left:644px;width:70px"></div>
<div class="dc L" style="left:715px;width:88px"></div>
<div class="dc L" style="left:804px;width:120px"><span class="c" style="width:72px"><svg width="72" height="12" viewBox="0 0 72 12" aria-hidden="true"><use href="#g12_5e7f" x="0"/><use href="#g12_4e1c" x="12"/><use href="#g12_7701" x="24"/><use href="#g12_6df1" x="36"/><use href="#g12_5733" x="48"/><use href="#g12_5e02" x="60"/></svg><span class="t">广东省深圳市</span></span></div>
<div class="dc L" style="left:925px;width:81px"><span class="l" style="margin-right:-8.41px">0755-82578412</span></div>
</div>
<div class="row" style="top:81px;color:#c00000;width:1006px">
<div class="ic" style="width:11px"></div>
<div class="dc L" style="left:13px;width:88px"><span class="l" style="margin-right:-8.34px">XC0911180002</span></div>
<div class="dc L" style="left:102px;width:70px"><span class="l" style="margin-right:-6.14px">2009-11-18</span></div>
<div class="dc L" style="left:173px;width:80px"><span class="c" style="width:48px"><svg width="48" height="12" viewBox="0 0 48 12" aria-hidden="true"><use href="#g12_673a" x="0"/><use href="#g12_68b0" x="12"/><use href="#g12_4ed3" x="24"/><use href="#g12_5e93" x="36"/></svg><span class="t">机械仓库</span></span></div>
<div class="dc L" style="left:254px;width:85px"><span class="l" style="margin-right:-6.00px">DW000003</span></div>
<div class="dc L" style="left:340px;width:120px"><span class="c" style="width:48px"><svg width="48" height="12" viewBox="0 0 48 12" aria-hidden="true"><use href="#g12_5174" x="0"/><use href="#g12_534e" x="12"/><use href="#g12_7535" x="24"/><use href="#g12_5b50" x="36"/></svg><span class="t">兴华电子</span></span></div>
<div class="dc R" style="left:461px;width:70px"><span class="l" style="margin-right:-2.67px">2980</span></div>
<div class="dc R" style="left:532px;width:50px"></div>
<div class="dc L" style="left:583px;width:60px"><span class="c" style="width:48px"><svg width="48" height="12" viewBox="0 0 48 12" aria-hidden="true"><use href="#g12_73b0" x="0"/><use href="#g12_91d1" x="12"/><use href="#g12_7ed3" x="24"/><use href="#g12_5e10" x="36"/></svg><span class="t">现金结帐</span></span></div>
<div class="dc L" style="left:644px;width:70px"></div>
<div class="dc L" style="left:715px;width:88px"></div>
<div class="dc L" style="left:804px;width:120px"><span class="c" style="width:72px"><svg width="72" height="12" viewBox="0 0 72 12" aria-hidden="true"><use href="#g12_5e7f" x="0"/><use href="#g12_4e1c" x="12"/><use href="#g12_7701" x="24"/><use href="#g12_6df1" x="36"/><use href="#g12_5733" x="48"/><use href="#g12_5e02" x="60"/></svg><span class="t">广东省深圳市</span></span></div>
<div class="dc L" style="left:925px;width:81px"><span class="l" style="margin-right:-8.41px">0755-82578412</span></div>
</div>
<div class="row" style="top:97px;color:#000080;width:1006px">
<div class="ic" style="width:11px"></div>
<div class="dc L" style="left:13px;width:88px"><span class="l" style="margin-right:-8.34px">XC0911180001</span></div>
<div class="dc L" style="left:102px;width:70px"><span class="l" style="margin-right:-6.14px">2009-11-18</span></div>
<div class="dc L" style="left:173px;width:80px"><span class="c" style="width:48px"><svg width="48" height="12" viewBox="0 0 48 12" aria-hidden="true"><use href="#g12_786c" x="0"/><use href="#g12_4ef6" x="12"/><use href="#g12_4ed3" x="24"/><use href="#g12_5e93" x="36"/></svg><span class="t">硬件仓库</span></span></div>
<div class="dc L" style="left:254px;width:85px"><span class="l" style="margin-right:-6.00px">DW000002</span></div>
<div class="dc L" style="left:340px;width:120px"><span class="c" style="width:96px"><svg width="96" height="12" viewBox="0 0 96 12" aria-hidden="true"><use href="#g12_516c" x="0"/><use href="#g12_65b0" x="12"/><use href="#g12_79d1" x="24"/><use href="#g12_6280" x="36"/><use href="#g12_6709" x="48"/><use href="#g12_9650" x="60"/><use href="#g12_516c" x="72"/><use href="#g12_53f8" x="84"/></svg><span class="t">公新科技有限公司</span></span></div>
<div class="dc R" style="left:461px;width:70px"><span class="l" style="margin-right:-2.67px">7110</span></div>
<div class="dc R" style="left:532px;width:50px"><span class="l" style="margin-right:-0.67px">6</span></div>
<div class="dc L" style="left:583px;width:60px"><span class="l" style="margin-right:-1.33px">90</span><span class="c" style="width:36px"><svg width="36" height="12" viewBox="0 0 36 12" aria-hidden="true"><use href="#g12_5929" x="0"/><use href="#g12_7ed3" x="12"/><use href="#g12_5e10" x="24"/></svg><span class="t">天结帐</span></span></div>
<div class="dc L" style="left:644px;width:70px"><span class="l" style="margin-right:-6.14px">2010-02-16</span></div>
<div class="dc L" style="left:715px;width:88px"><span class="l" style="margin-right:-9.07px">WHC_D0014514</span></div>
<div class="dc L" style="left:804px;width:120px"><span class="c" style="width:72px"><svg width="72" height="12" viewBox="0 0 72 12" aria-hidden="true"><use href="#g12_5e7f" x="0"/><use href="#g12_4e1c" x="12"/><use href="#g12_7701" x="24"/><use href="#g12_6df1" x="36"/><use href="#g12_5733" x="48"/><use href="#g12_5e02" x="60"/></svg><span class="t">广东省深圳市</span></span></div>
<div class="dc L" style="left:925px;width:81px"><span class="l" style="margin-right:-8.41px">0755-88841456</span></div>
</div>
<div class="vl" style="left:12px;top:113px;height:281px"></div>
<div class="vl" style="left:101px;top:113px;height:281px"></div>
<div class="vl" style="left:172px;top:113px;height:281px"></div>
<div class="vl" style="left:253px;top:113px;height:281px"></div>
<div class="vl" style="left:339px;top:113px;height:281px"></div>
<div class="vl" style="left:460px;top:113px;height:281px"></div>
<div class="vl" style="left:531px;top:113px;height:281px"></div>
<div class="vl" style="left:582px;top:113px;height:281px"></div>
<div class="vl" style="left:643px;top:113px;height:281px"></div>
<div class="vl" style="left:714px;top:113px;height:281px"></div>
<div class="vl" style="left:803px;top:113px;height:281px"></div>
<div class="vl" style="left:924px;top:113px;height:281px"></div>
<div class="hl" style="left:1px;top:377px;width:1006px"></div>
<div class="frow" style="top:378px;width:1006px">
<div class="ic" style="width:11px"></div>
<div class="fc C" style="left:13px;width:88px"><span class="c" style="width:39px"><svg width="39" height="12" viewBox="0 0 39 12" aria-hidden="true"><use href="#g12_8bb0" x="0"/><use href="#g12_5f55" x="13"/><use href="#g12_6570" x="26"/><use href="#g12_8bb0" x="1"/><use href="#g12_5f55" x="14"/><use href="#g12_6570" x="27"/></svg><span class="t">记录数</span></span></div>
<div class="fc C" style="left:102px;width:70px"><span class="lb">6</span></div>
<div class="fc R" style="left:461px;width:70px"><span class="lb">73970</span></div>
</div>
<div class="sbv" style="left:1006px;top:1px;height:394px"></div><div class="sbb" style="left:1008px;top:2px;width:13px;height:14px"><svg width="13" height="14" viewBox="0 0 13 14" style="shape-rendering:auto"><path d="M2.9 8.8L6.5 5.2L10.1 8.8" stroke="#4d6185" stroke-width="2.100" fill="none"/></svg></div><div class="sbt" style="left:1008px;top:84px;width:13px;height:194px"><i class="gv" style="top:93px"></i></div><div class="sbb" style="left:1008px;top:378px;width:13px;height:14px"><svg width="13" height="14" viewBox="0 0 13 14" style="shape-rendering:auto"><path d="M2.9 5.4L6.5 9.0L10.1 5.4" stroke="#4d6185" stroke-width="2.100" fill="none"/></svg></div><div class="sbh" style="left:1px;top:394px;width:1005px;height:18px"></div><div class="sbb" style="left:2px;top:396px;width:14px;height:13px"><svg width="14" height="13" viewBox="0 0 14 13" style="shape-rendering:auto"><path d="M8.6 2.9L5.0 6.5L8.6 10.1" stroke="#4d6185" stroke-width="2.100" fill="none"/></svg></div><div class="sbt" style="left:19px;top:396px;width:14px;height:13px"><i class="gh" style="left:2px"></i></div><div class="sbb" style="left:990px;top:396px;width:14px;height:13px"><svg width="14" height="13" viewBox="0 0 14 13" style="shape-rendering:auto"><path d="M5.4 2.9L9.0 6.5L5.4 10.1" stroke="#4d6185" stroke-width="2.100" fill="none"/></svg></div><div class="sbc" style="left:1006px;top:394px"></div>
</div>
<div class="grid" id="g2" style="top:503px;height:213px">
<div class="hr" style="top:1px">
<div class="hc ind" style="left:1px;width:11px"></div>
<div class="hc" style="left:13px;width:60px"><span class="c" style="width:48px"><svg width="48" height="12" viewBox="0 0 48 12" aria-hidden="true"><use href="#g12_5546" x="0"/><use href="#g12_54c1" x="12"/><use href="#g12_7f16" x="24"/><use href="#g12_53f7" x="36"/></svg><span class="t">商品编号</span></span></div>
<div class="hc" style="left:74px;width:100px"><span class="c" style="width:48px"><svg width="48" height="12" viewBox="0 0 48 12" aria-hidden="true"><use href="#g12_5546" x="0"/><use href="#g12_54c1" x="12"/><use href="#g12_540d" x="24"/><use href="#g12_79f0" x="36"/></svg><span class="t">商品名称</span></span></div>
<div class="hc" style="left:175px;width:60px"><span class="c" style="width:48px"><svg width="48" height="12" viewBox="0 0 48 12" aria-hidden="true"><use href="#g12_5546" x="0"/><use href="#g12_54c1" x="12"/><use href="#g12_89c4" x="24"/><use href="#g12_683c" x="36"/></svg><span class="t">商品规格</span></span></div>
<div class="hc" style="left:236px;width:60px"><span class="c" style="width:48px"><svg width="48" height="12" viewBox="0 0 48 12" aria-hidden="true"><use href="#g12_5206" x="0"/><use href="#g12_7c7b" x="12"/><use href="#g12_540d" x="24"/><use href="#g12_79f0" x="36"/></svg><span class="t">分类名称</span></span></div>
<div class="hc" style="left:297px;width:60px"><span class="c" style="width:24px"><svg width="24" height="12" viewBox="0 0 24 12" aria-hidden="true"><use href="#g12_5355" x="0"/><use href="#g12_4f4d" x="12"/></svg><span class="t">单位</span></span></div>
<div class="hc" style="left:358px;width:60px"><span class="c" style="width:24px"><svg width="24" height="12" viewBox="0 0 24 12" aria-hidden="true"><use href="#g12_6570" x="0"/><use href="#g12_91cf" x="12"/></svg><span class="t">数量</span></span></div>
<div class="hc" style="left:419px;width:60px"><span class="c" style="width:24px"><svg width="24" height="12" viewBox="0 0 24 12" aria-hidden="true"><use href="#g12_5355" x="0"/><use href="#g12_4ef7" x="12"/></svg><span class="t">单价</span></span></div>
<div class="hc" style="left:480px;width:60px"><span class="c" style="width:24px"><svg width="24" height="12" viewBox="0 0 24 12" aria-hidden="true"><use href="#g12_91d1" x="0"/><use href="#g12_989d" x="12"/></svg><span class="t">金额</span></span></div>
<div class="hc" style="left:541px;width:90px"><span class="c" style="width:36px"><svg width="36" height="12" viewBox="0 0 36 12" aria-hidden="true"><use href="#g12_6761" x="0"/><use href="#g12_5f62" x="12"/><use href="#g12_7801" x="24"/></svg><span class="t">条形码</span></span></div>
<div class="hc" style="left:632px;width:88px"><span class="c" style="width:48px"><svg width="48" height="12" viewBox="0 0 48 12" aria-hidden="true"><use href="#g12_8ba2" x="0"/><use href="#g12_5355" x="12"/><use href="#g12_5355" x="24"/><use href="#g12_53f7" x="36"/></svg><span class="t">订单单号</span></span></div>
<div class="hc" style="left:721px;width:150px"><span class="c" style="width:24px"><svg width="24" height="12" viewBox="0 0 24 12" aria-hidden="true"><use href="#g12_5907" x="0"/><use href="#g12_6ce8" x="12"/></svg><span class="t">备注</span></span></div>
</div>
<div class="row sel" style="top:17px;color:#fff;width:871px">
<div class="ic" style="width:11px"><s></s></div>
<div class="dc L" style="left:13px;width:60px"><span class="l" style="margin-right:-5.61px">SP000007</span></div>
<div class="dc L" style="left:74px;width:100px"><span class="l" style="margin-right:-12.70px">Intel Core 2 Duo E4500</span></div>
<div class="dc L" style="left:175px;width:60px"><span class="l" style="margin-right:-4.78px">LGA 775</span></div>
<div class="dc L" style="left:236px;width:60px"><span class="l" style="margin-right:-2.53px">CPU</span></div>
<div class="dc L" style="left:297px;width:60px"><span class="c" style="width:12px"><svg width="12" height="12" viewBox="0 0 12 12" aria-hidden="true"><use href="#g12_4e2a" x="0"/></svg><span class="t">个</span></span></div>
<div class="dc R" style="left:358px;width:60px"><span class="l" style="margin-right:-0.67px">1</span></div>
<div class="dc R" style="left:419px;width:60px"><span class="l" style="margin-right:-2.00px">800</span></div>
<div class="dc R" style="left:480px;width:60px"><span class="l" style="margin-right:-2.00px">800</span></div>
<div class="dc L" style="left:541px;width:90px"></div>
<div class="dc L" style="left:632px;width:88px"></div>
<div class="dc L" style="left:721px;width:150px"></div>
</div>
<div class="row" style="top:33px;color:#000;width:871px">
<div class="ic" style="width:11px"></div>
<div class="dc L" style="left:13px;width:60px"><span class="l" style="margin-right:-5.61px">SP000008</span></div>
<div class="dc L" style="left:74px;width:100px"><span class="l" style="margin-right:-10.89px">Intel Pentium E2140</span></div>
<div class="dc L" style="left:175px;width:60px"><span class="l" style="margin-right:-4.78px">LGA 775</span></div>
<div class="dc L" style="left:236px;width:60px"><span class="l" style="margin-right:-2.53px">CPU</span></div>
<div class="dc L" style="left:297px;width:60px"><span class="c" style="width:12px"><svg width="12" height="12" viewBox="0 0 12 12" aria-hidden="true"><use href="#g12_4e2a" x="0"/></svg><span class="t">个</span></span></div>
<div class="dc R" style="left:358px;width:60px"><span class="l" style="margin-right:-0.67px">2</span></div>
<div class="dc R" style="left:419px;width:60px"><span class="l" style="margin-right:-2.00px">460</span></div>
<div class="dc R" style="left:480px;width:60px"><span class="l" style="margin-right:-2.00px">920</span></div>
<div class="dc L" style="left:541px;width:90px"></div>
<div class="dc L" style="left:632px;width:88px"></div>
<div class="dc L" style="left:721px;width:150px"></div>
</div>
<div class="vl" style="left:12px;top:49px;height:162px"></div>
<div class="vl" style="left:73px;top:49px;height:162px"></div>
<div class="vl" style="left:174px;top:49px;height:162px"></div>
<div class="vl" style="left:235px;top:49px;height:162px"></div>
<div class="vl" style="left:296px;top:49px;height:162px"></div>
<div class="vl" style="left:357px;top:49px;height:162px"></div>
<div class="vl" style="left:418px;top:49px;height:162px"></div>
<div class="vl" style="left:479px;top:49px;height:162px"></div>
<div class="vl" style="left:540px;top:49px;height:162px"></div>
<div class="vl" style="left:631px;top:49px;height:162px"></div>
<div class="vl" style="left:720px;top:49px;height:162px"></div>
<div class="vl" style="left:871px;top:49px;height:162px"></div>
<div class="hl" style="left:1px;top:179px;width:871px"></div>
<div class="frow" style="top:180px;width:871px">
<div class="ic" style="width:11px"></div>
<div class="fc C" style="left:13px;width:60px"><span class="c" style="width:39px"><svg width="39" height="12" viewBox="0 0 39 12" aria-hidden="true"><use href="#g12_8bb0" x="0"/><use href="#g12_5f55" x="13"/><use href="#g12_6570" x="26"/><use href="#g12_8bb0" x="1"/><use href="#g12_5f55" x="14"/><use href="#g12_6570" x="27"/></svg><span class="t">记录数</span></span></div>
<div class="fc C" style="left:358px;width:60px"><span class="c" style="width:26px"><svg width="26" height="12" viewBox="0 0 26 12" aria-hidden="true"><use href="#g12_603b" x="0"/><use href="#g12_8ba1" x="13"/><use href="#g12_603b" x="1"/><use href="#g12_8ba1" x="14"/></svg><span class="t">总计</span></span></div>
<div class="fc C" style="left:480px;width:60px"><span class="c" style="width:26px"><svg width="26" height="12" viewBox="0 0 26 12" aria-hidden="true"><use href="#g12_603b" x="0"/><use href="#g12_989d" x="13"/><use href="#g12_603b" x="1"/><use href="#g12_989d" x="14"/></svg><span class="t">总额</span></span></div>
</div>
<div class="frow" style="top:196px;width:871px">
<div class="ic" style="width:11px"></div>
<div class="fc C" style="left:13px;width:60px"><span class="lb">2</span></div>
<div class="fc R" style="left:358px;width:60px"><span class="lb">3</span></div>
<div class="fc R" style="left:480px;width:60px"><span class="lb">1720</span></div>
</div>
<div class="sbv" style="left:1006px;top:1px;height:211px"></div><div class="sbb" style="left:1008px;top:2px;width:13px;height:14px"><svg width="13" height="14" viewBox="0 0 13 14" style="shape-rendering:auto"><path d="M2.9 8.8L6.5 5.2L10.1 8.8" stroke="#4d6185" stroke-width="2.100" fill="none"/></svg></div><div class="sbt" style="left:1008px;top:19px;width:13px;height:115px"><i class="gv" style="top:53px"></i></div><div class="sbb" style="left:1008px;top:196px;width:13px;height:14px"><svg width="13" height="14" viewBox="0 0 13 14" style="shape-rendering:auto"><path d="M2.9 5.4L6.5 9.0L10.1 5.4" stroke="#4d6185" stroke-width="2.100" fill="none"/></svg></div>
</div>
<div id="status">
<div class="sp" style="left:0px;width:251px"><div class="st" style="left:19px"><span class="c" style="width:48px"><svg width="48" height="12" viewBox="0 0 48 12" aria-hidden="true"><use href="#g12_516c" x="0"/><use href="#g12_53f8" x="12"/><use href="#g12_540d" x="24"/><use href="#g12_79f0" x="36"/></svg><span class="t">公司名称</span></span><span class="mo">:</span><span class="c" style="width:156px"><svg width="156" height="12" viewBox="0 0 156 12" aria-hidden="true"><use href="#g12_5e7f" x="0"/><use href="#g12_5dde" x="12"/><use href="#g12_5e02" x="24"/><use href="#g12_4e50" x="36"/><use href="#g12_5168" x="48"/><use href="#g12_4fe1" x="60"/><use href="#g12_606f" x="72"/><use href="#g12_79d1" x="84"/><use href="#g12_6280" x="96"/><use href="#g12_6709" x="108"/><use href="#g12_9650" x="120"/><use href="#g12_516c" x="132"/><use href="#g12_53f8" x="144"/></svg><span class="t">广州市乐全信息科技有限公司</span></span></div></div>
<div class="sp" style="left:252px;width:349px"><div class="st" style="left:67px"><span class="c" style="width:36px"><svg width="36" height="12" viewBox="0 0 36 12" aria-hidden="true"><use href="#g12_670d" x="0"/><use href="#g12_52a1" x="12"/><use href="#g12_5668" x="24"/></svg><span class="t">服务器</span></span><span class="mo">:xingming</span><span class="mo">&nbsp;&nbsp;</span><span class="c" style="width:60px"><svg width="60" height="12" viewBox="0 0 60 12" aria-hidden="true"><use href="#g12_6570" x="0"/><use href="#g12_636e" x="12"/><use href="#g12_5e93" x="24"/><use href="#g12_540d" x="36"/><use href="#g12_79f0" x="48"/></svg><span class="t">数据库名称</span></span><span class="mo">:sp_data</span></div></div>
<div class="sp" style="left:602px;width:99px"><div class="st" style="left:9px"><span class="c" style="width:36px"><svg width="36" height="12" viewBox="0 0 36 12" aria-hidden="true"><use href="#g12_64cd" x="0"/><use href="#g12_4f5c" x="12"/><use href="#g12_5458" x="24"/></svg><span class="t">操作员</span></span><span class="mo">:</span><span class="c" style="width:36px"><svg width="36" height="12" viewBox="0 0 36 12" aria-hidden="true"><use href="#g12_7ba1" x="0"/><use href="#g12_7406" x="12"/><use href="#g12_5458" x="24"/></svg><span class="t">管理员</span></span></div></div>
<div class="sp" style="left:702px;width:322px"><div class="st" style="left:1px"><span class="c" style="width:48px"><svg width="48" height="12" viewBox="0 0 48 12" aria-hidden="true"><use href="#g12_5f53" x="0"/><use href="#g12_524d" x="12"/><use href="#g12_65e5" x="24"/><use href="#g12_671f" x="36"/></svg><span class="t">当前日期</span></span><span class="mo">:2016-02-17 15:20:43</span></div></div>
</div>
<div id="taskbar"><div></div><b></b></div>
</body></html>
